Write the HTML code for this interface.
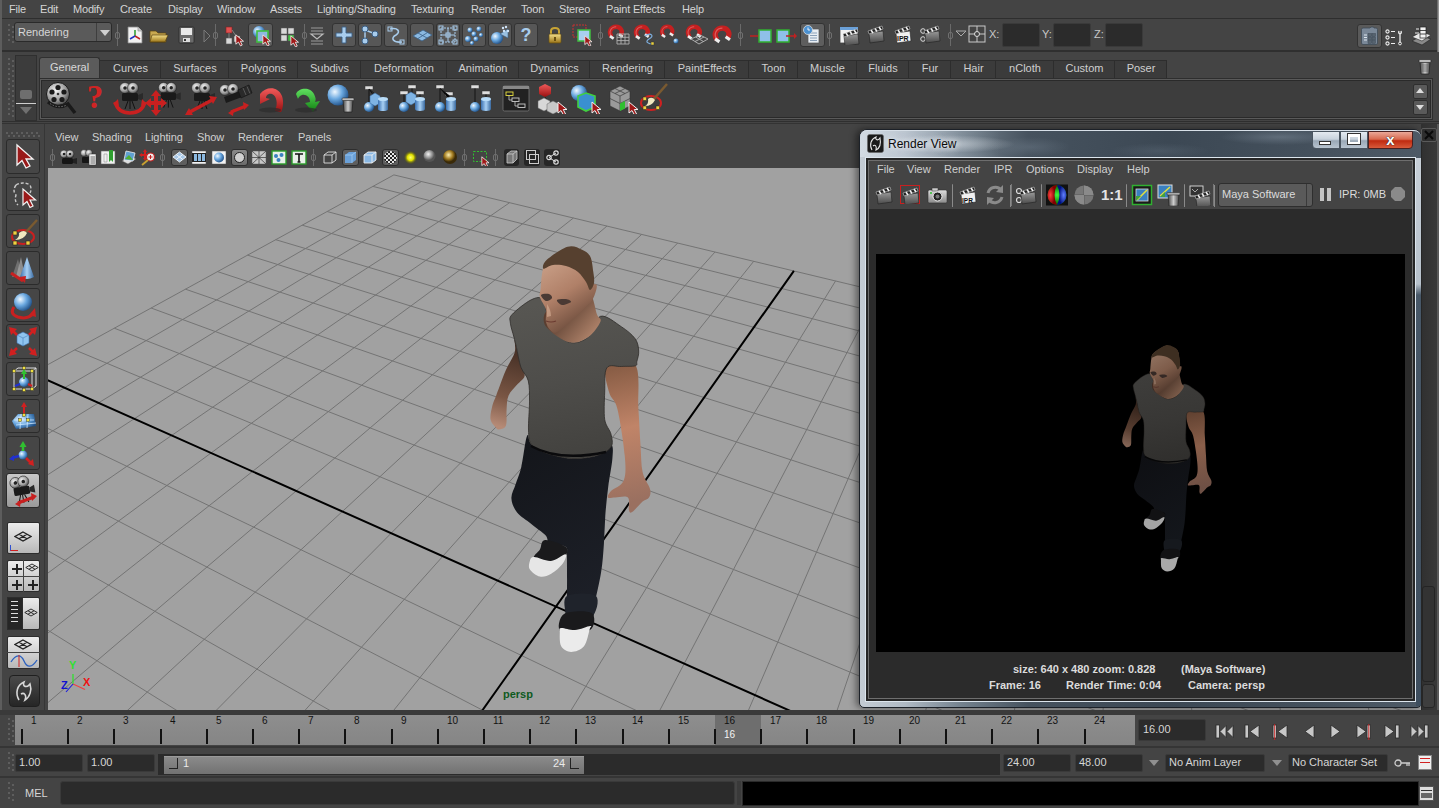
<!DOCTYPE html><html><head><meta charset="utf-8"><style>
*{margin:0;padding:0;box-sizing:border-box}
html,body{width:1439px;height:808px;overflow:hidden;background:#444444;font-family:"Liberation Sans",sans-serif}
.b{position:absolute}
.t{position:absolute;white-space:nowrap;line-height:1;font-family:"Liberation Sans",sans-serif}
svg{position:absolute;left:0;top:0}
</style></head><body><div class="b" style="left:0px;top:0px;width:1439px;height:18px;background:#444444"></div><div class="b" style="left:0px;top:18px;width:1439px;height:1px;background:#2e2e2e"></div><div class="t" style="left:9px;top:4px;font-size:11px;color:#d4d4d4;letter-spacing:-0.2px">File</div><div class="t" style="left:40px;top:4px;font-size:11px;color:#d4d4d4;letter-spacing:-0.2px">Edit</div><div class="t" style="left:73px;top:4px;font-size:11px;color:#d4d4d4;letter-spacing:-0.2px">Modify</div><div class="t" style="left:120px;top:4px;font-size:11px;color:#d4d4d4;letter-spacing:-0.2px">Create</div><div class="t" style="left:168px;top:4px;font-size:11px;color:#d4d4d4;letter-spacing:-0.2px">Display</div><div class="t" style="left:217px;top:4px;font-size:11px;color:#d4d4d4;letter-spacing:-0.2px">Window</div><div class="t" style="left:270px;top:4px;font-size:11px;color:#d4d4d4;letter-spacing:-0.2px">Assets</div><div class="t" style="left:317px;top:4px;font-size:11px;color:#d4d4d4;letter-spacing:-0.2px">Lighting/Shading</div><div class="t" style="left:411px;top:4px;font-size:11px;color:#d4d4d4;letter-spacing:-0.2px">Texturing</div><div class="t" style="left:471px;top:4px;font-size:11px;color:#d4d4d4;letter-spacing:-0.2px">Render</div><div class="t" style="left:521px;top:4px;font-size:11px;color:#d4d4d4;letter-spacing:-0.2px">Toon</div><div class="t" style="left:559px;top:4px;font-size:11px;color:#d4d4d4;letter-spacing:-0.2px">Stereo</div><div class="t" style="left:606px;top:4px;font-size:11px;color:#d4d4d4;letter-spacing:-0.2px">Paint Effects</div><div class="t" style="left:682px;top:4px;font-size:11px;color:#d4d4d4;letter-spacing:-0.2px">Help</div><div class="b" style="left:0px;top:19px;width:1439px;height:32px;background:#444444"></div><div class="b" style="left:0px;top:50px;width:1439px;height:2px;background:#2f2f2f"></div><div class="b" style="left:8px;top:24px;width:2px;height:2px;background:#5e5e5e"></div><div class="b" style="left:12px;top:26px;width:2px;height:2px;background:#5e5e5e"></div><div class="b" style="left:8px;top:29px;width:2px;height:2px;background:#5e5e5e"></div><div class="b" style="left:12px;top:31px;width:2px;height:2px;background:#5e5e5e"></div><div class="b" style="left:8px;top:34px;width:2px;height:2px;background:#5e5e5e"></div><div class="b" style="left:12px;top:36px;width:2px;height:2px;background:#5e5e5e"></div><div class="b" style="left:8px;top:39px;width:2px;height:2px;background:#5e5e5e"></div><div class="b" style="left:12px;top:41px;width:2px;height:2px;background:#5e5e5e"></div><div class="b" style="left:14px;top:22px;width:98px;height:20px;background:#5a5a5a;border:1px solid #2a2a2a;border-radius:3px"></div><div class="b" style="left:96px;top:23px;width:1px;height:18px;background:#3e3e3e"></div><div class="t" style="left:18px;top:27px;font-size:11px;color:#d6d6d6;">Rendering</div><div class="b" style="left:100px;top:30px;width:0;height:0;border-left:5px solid transparent;border-right:5px solid transparent;border-top:6px solid #d0d0d0"></div><div class="b" style="left:117px;top:24px;width:1px;height:22px;background:#6a6a6a"></div><div class="b" style="left:115px;top:32px;width:5px;height:7px;border:1px solid #707070;border-radius:2px"></div><div class="b" style="left:215px;top:24px;width:1px;height:22px;background:#6a6a6a"></div><div class="b" style="left:213px;top:32px;width:5px;height:7px;border:1px solid #707070;border-radius:2px"></div><div class="b" style="left:304px;top:24px;width:1px;height:22px;background:#6a6a6a"></div><div class="b" style="left:302px;top:32px;width:5px;height:7px;border:1px solid #707070;border-radius:2px"></div><div class="b" style="left:600px;top:24px;width:1px;height:22px;background:#6a6a6a"></div><div class="b" style="left:598px;top:32px;width:5px;height:7px;border:1px solid #707070;border-radius:2px"></div><div class="b" style="left:740px;top:24px;width:1px;height:22px;background:#6a6a6a"></div><div class="b" style="left:738px;top:32px;width:5px;height:7px;border:1px solid #707070;border-radius:2px"></div><div class="b" style="left:829px;top:24px;width:1px;height:22px;background:#6a6a6a"></div><div class="b" style="left:827px;top:32px;width:5px;height:7px;border:1px solid #707070;border-radius:2px"></div><div class="b" style="left:950px;top:24px;width:1px;height:22px;background:#6a6a6a"></div><div class="b" style="left:948px;top:32px;width:5px;height:7px;border:1px solid #707070;border-radius:2px"></div><svg width="0" height="0" style="position:absolute"><defs><linearGradient id="gblue" x1="0" y1="0" x2="1" y2="1"><stop offset="0" stop-color="#dff0ff"/><stop offset="1" stop-color="#5a9ad0"/></linearGradient><radialGradient id="gsph" cx="0.35" cy="0.35" r="0.7"><stop offset="0" stop-color="#f0f8ff"/><stop offset="0.5" stop-color="#6aa8e0"/><stop offset="1" stop-color="#1f4f86"/></radialGradient><linearGradient id="gred" x1="0" y1="0" x2="0" y2="1"><stop offset="0" stop-color="#f05a5a"/><stop offset="1" stop-color="#9a1010"/></linearGradient><linearGradient id="ggold" x1="0" y1="0" x2="0" y2="1"><stop offset="0" stop-color="#f5e08a"/><stop offset="1" stop-color="#9a7418"/></linearGradient><linearGradient id="gclap" x1="0" y1="0" x2="0" y2="1"><stop offset="0" stop-color="#9a9a9a"/><stop offset="1" stop-color="#4a4a4a"/></linearGradient><linearGradient id="ggrey" x1="0" y1="0" x2="0" y2="1"><stop offset="0" stop-color="#e0e0e0"/><stop offset="1" stop-color="#8a8a8a"/></linearGradient></defs></svg><svg class="b" style="left:127px;top:26px" width="16" height="18" viewBox="0 0 16 18"><path d="M1 1H11L15 5V17H1Z" fill="#f2f2f2" stroke="#888" stroke-width="0.8"/><path d="M11 1V5H15" fill="#ccc" stroke="#888" stroke-width="0.6"/><path d="M8 10V4" stroke="#2a9a2a" stroke-width="1.5"/><path d="M8 10L13 13" stroke="#c02020" stroke-width="1.5"/><path d="M8 10L3 13" stroke="#2030c0" stroke-width="1.5"/></svg><svg class="b" style="left:149px;top:28px" width="20" height="16" viewBox="0 0 20 16"><path d="M1 3H7L9 5H17V14H1Z" fill="#c8a850" stroke="#5a4410" stroke-width="0.7"/><path d="M3 7H19L16 14H1Z" fill="url(#ggold)" stroke="#5a4410" stroke-width="0.7"/></svg><svg class="b" style="left:178px;top:26px" width="17" height="18" viewBox="0 0 17 18"><path d="M1 2Q1 1 2 1H15Q16 1 16 2V16Q16 17 15 17H2Q1 17 1 16Z" fill="#6a6a6a" stroke="#2a2a2a" stroke-width="0.8"/><rect x="3" y="2" width="11" height="7" fill="#e8e8e8"/><rect x="5" y="12" width="7" height="4" fill="#ddd"/><rect x="6" y="13" width="2" height="2" fill="#333"/></svg><svg class="b" style="left:202px;top:29px" width="9" height="14" viewBox="0 0 9 14"><path d="M2 1L8 7L2 13Z" fill="none" stroke="#7a7a7a" stroke-width="1"/></svg><svg class="b" style="left:224px;top:25px" width="22" height="22" viewBox="0 0 22 22"><rect x="2" y="2" width="6" height="6" fill="#e05050" stroke="#802020" stroke-width="0.6"/><rect x="2" y="13" width="6" height="6" fill="#d8d8d8" stroke="#555" stroke-width="0.6"/><rect x="10" y="11" width="6" height="6" fill="#d8d8d8" stroke="#555" stroke-width="0.6"/><path d="M5 8V13M8 5L12 11" stroke="#aaa" stroke-width="0.6"/><path transform="translate(11 9) scale(0.85)" d="M1 1L1 12L4 9.5L6.5 14L8.5 13L6.3 8.5L10 8.5Z" fill="#a01818" stroke="#f0f0f0" stroke-width="1"/></svg><div class="b" style="left:248px;top:23px;width:25px;height:24px;background:#5c5c5c;border:1px solid #333;border-radius:3px"></div><svg class="b" style="left:250px;top:24px" width="22" height="22" viewBox="0 0 22 22"><circle cx="9" cy="8" r="6" fill="url(#gsph)"/><rect x="7" y="7" width="11" height="11" fill="#8fb8e0" stroke="#40c040" stroke-width="1.6"/><path transform="translate(12 10) scale(0.85)" d="M1 1L1 12L4 9.5L6.5 14L8.5 13L6.3 8.5L10 8.5Z" fill="#a01818" stroke="#f0f0f0" stroke-width="1"/></svg><svg class="b" style="left:279px;top:25px" width="22" height="22" viewBox="0 0 22 22"><rect x="2" y="3" width="6" height="6" fill="#d8d8d8" stroke="#555" stroke-width="0.5"/><rect x="9" y="3" width="6" height="6" fill="#d8d8d8" stroke="#555" stroke-width="0.5"/><rect x="2" y="10" width="6" height="6" fill="#d8d8d8" stroke="#555" stroke-width="0.5"/><rect x="9" y="10" width="6" height="6" fill="#40c040" stroke="#555" stroke-width="0.5"/><path transform="translate(11 10) scale(0.85)" d="M1 1L1 12L4 9.5L6.5 14L8.5 13L6.3 8.5L10 8.5Z" fill="#a01818" stroke="#f0f0f0" stroke-width="1"/></svg><svg class="b" style="left:308px;top:26px" width="18" height="20" viewBox="0 0 18 20"><path d="M3 2H15M3 5H15M3 15H15M3 18H15" stroke="#9a9a9a" stroke-width="1"/><path d="M3 8H15L9 13Z" fill="none" stroke="#bbb" stroke-width="1.2"/></svg><div class="b" style="left:332px;top:23px;width:24px;height:24px;background:#575757;border:1px solid #333;border-radius:3px"></div><div class="b" style="left:358px;top:23px;width:24px;height:24px;background:#575757;border:1px solid #333;border-radius:3px"></div><div class="b" style="left:384px;top:23px;width:24px;height:24px;background:#575757;border:1px solid #333;border-radius:3px"></div><div class="b" style="left:410px;top:23px;width:24px;height:24px;background:#575757;border:1px solid #333;border-radius:3px"></div><div class="b" style="left:436px;top:23px;width:24px;height:24px;background:#575757;border:1px solid #333;border-radius:3px"></div><div class="b" style="left:462px;top:23px;width:24px;height:24px;background:#575757;border:1px solid #333;border-radius:3px"></div><div class="b" style="left:488px;top:23px;width:24px;height:24px;background:#575757;border:1px solid #333;border-radius:3px"></div><div class="b" style="left:514px;top:23px;width:24px;height:24px;background:#575757;border:1px solid #333;border-radius:3px"></div><svg class="b" style="left:332px;top:23px" width="24" height="24" viewBox="0 0 24 24"><path d="M10 4H14V10H20V14H14V20H10V14H4V10H10Z" fill="#a8ccec" stroke="#3a5e84" stroke-width="0.9"/></svg><svg class="b" style="left:358px;top:23px" width="24" height="24" viewBox="0 0 24 24"><path d="M7 7V17M7 7L15 10" stroke="#a8ccec" stroke-width="1.5"/><circle cx="7" cy="6" r="3" fill="#a8ccec" stroke="#3a5e84"/><circle cx="7" cy="18" r="3" fill="#a8ccec" stroke="#3a5e84"/><circle cx="17" cy="11" r="3" fill="#a8ccec" stroke="#3a5e84"/></svg><svg class="b" style="left:384px;top:23px" width="24" height="24" viewBox="0 0 24 24"><path d="M6 6C14 4 17 9 12 12C6 15 9 20 18 19" fill="none" stroke="#a8ccec" stroke-width="1.6"/><rect x="4" y="4" width="4" height="4" fill="none" stroke="#a8ccec"/><rect x="16" y="17" width="4" height="4" fill="none" stroke="#a8ccec"/></svg><svg class="b" style="left:410px;top:23px" width="24" height="24" viewBox="0 0 24 24"><path d="M3 13L13 7L22 12L12 18Z" fill="#8ab8e0" stroke="#3a5e84" stroke-width="0.8"/><path d="M8 10L17 15M8 15.5L17.5 9.5" stroke="#3a5e84" stroke-width="0.8"/></svg><svg class="b" style="left:436px;top:23px" width="24" height="24" viewBox="0 0 24 24"><rect x="5" y="5" width="14" height="14" fill="none" stroke="#a8ccec" stroke-dasharray="2 1"/><path d="M5 12H19M12 5V19" stroke="#a8ccec"/><rect x="3" y="3" width="4" height="4" fill="none" stroke="#a8ccec"/><rect x="17" y="3" width="4" height="4" fill="none" stroke="#a8ccec"/><rect x="3" y="17" width="4" height="4" fill="none" stroke="#a8ccec"/><rect x="17" y="17" width="4" height="4" fill="none" stroke="#a8ccec"/><rect x="10" y="10" width="4" height="4" fill="none" stroke="#a8ccec"/></svg><svg class="b" style="left:462px;top:23px" width="24" height="24" viewBox="0 0 24 24"><circle cx="8" cy="7" r="2.5" fill="url(#gsph)"/><circle cx="17" cy="6" r="2.5" fill="url(#gsph)"/><circle cx="12" cy="11" r="2.5" fill="url(#gsph)"/><circle cx="6" cy="16" r="3" fill="url(#gsph)"/><circle cx="14" cy="16" r="2.5" fill="url(#gsph)"/><circle cx="19" cy="12" r="2" fill="url(#gsph)"/><circle cx="10" cy="20" r="2" fill="url(#gsph)"/></svg><svg class="b" style="left:488px;top:23px" width="24" height="24" viewBox="0 0 24 24"><circle cx="9" cy="15" r="6" fill="url(#gsph)"/><path d="M12 11L20 6V15Z" fill="#9ac0e0" stroke="#3a5e84" stroke-width="0.6"/><circle cx="15" cy="5" r="1.2" fill="#cfe4f8"/><circle cx="18" cy="4" r="1.2" fill="#cfe4f8"/><circle cx="20" cy="8" r="1.2" fill="#cfe4f8"/><circle cx="16" cy="8" r="1.2" fill="#cfe4f8"/></svg><div class="t" style="left:514px;top:26px;width:24px;text-align:center;font-size:18px;font-weight:bold;color:#a8ccec">?</div><svg class="b" style="left:547px;top:25px" width="16" height="20" viewBox="0 0 16 20"><path d="M4 9V6C4 2 12 2 12 6V9" fill="none" stroke="#c8a434" stroke-width="2"/><rect x="2" y="9" width="12" height="9" rx="1" fill="url(#ggold)" stroke="#6a5010" stroke-width="0.7"/><rect x="7" y="12" width="2" height="4" fill="#6a5010"/></svg><svg class="b" style="left:571px;top:23px" width="22" height="23" viewBox="0 0 22 23"><rect x="2" y="2" width="13" height="12" fill="none" stroke="#c83030" stroke-width="1" stroke-dasharray="2 1"/><rect x="7" y="7" width="12" height="11" fill="#a8d0f0" stroke="#40c040" stroke-width="1.5"/><path transform="translate(13 12) scale(0.8)" d="M1 1L1 12L4 9.5L6.5 14L8.5 13L6.3 8.5L10 8.5Z" fill="#a01818" stroke="#f0f0f0" stroke-width="1"/></svg><svg class="b" style="left:607px;top:24px" width="24" height="22" viewBox="0 0 24 22"><g transform="translate(2 1) scale(0.9)"><path d="M3 13C-1 8 2 2 8 2C13 2 16 7 13 11" fill="none" stroke="#c42020" stroke-width="5"/><path d="M3 13C-1 8 2 2 8 2" fill="none" stroke="#f08080" stroke-width="1.2" opacity="0.6"/><rect x="1" y="12" width="5" height="3" fill="#eee" transform="rotate(35 3 13)"/><rect x="11" y="10" width="5" height="3" fill="#eee" transform="rotate(35 13 11)"/></g><path d="M10 10H22V20H10ZM14 10V20M18 10V20M10 13.3H22M10 16.6H22" fill="none" stroke="#b0b0b0" stroke-width="0.9"/></svg><svg class="b" style="left:633px;top:24px" width="24" height="22" viewBox="0 0 24 22"><g transform="translate(2 1) scale(0.9)"><path d="M3 13C-1 8 2 2 8 2C13 2 16 7 13 11" fill="none" stroke="#c42020" stroke-width="5"/><path d="M3 13C-1 8 2 2 8 2" fill="none" stroke="#f08080" stroke-width="1.2" opacity="0.6"/><rect x="1" y="12" width="5" height="3" fill="#eee" transform="rotate(35 3 13)"/><rect x="11" y="10" width="5" height="3" fill="#eee" transform="rotate(35 13 11)"/></g><path d="M12 12C18 8 22 12 16 15C11 18 16 20 20 20" fill="none" stroke="#7fb0e0" stroke-width="1.2"/><rect x="18" y="18" width="3" height="3" fill="#e8d040" stroke="#333" stroke-width="0.5"/></svg><svg class="b" style="left:659px;top:24px" width="24" height="22" viewBox="0 0 24 22"><g transform="translate(2 1) scale(0.8)"><path d="M3 13C-1 8 2 2 8 2C13 2 16 7 13 11" fill="none" stroke="#c42020" stroke-width="5"/><path d="M3 13C-1 8 2 2 8 2" fill="none" stroke="#f08080" stroke-width="1.2" opacity="0.6"/><rect x="1" y="12" width="5" height="3" fill="#eee" transform="rotate(35 3 13)"/><rect x="11" y="10" width="5" height="3" fill="#eee" transform="rotate(35 13 11)"/></g><circle cx="17" cy="17" r="2.5" fill="url(#gsph)"/></svg><svg class="b" style="left:685px;top:24px" width="24" height="22" viewBox="0 0 24 22"><g transform="translate(2 1) scale(0.9)"><path d="M3 13C-1 8 2 2 8 2C13 2 16 7 13 11" fill="none" stroke="#c42020" stroke-width="5"/><path d="M3 13C-1 8 2 2 8 2" fill="none" stroke="#f08080" stroke-width="1.2" opacity="0.6"/><rect x="1" y="12" width="5" height="3" fill="#eee" transform="rotate(35 3 13)"/><rect x="11" y="10" width="5" height="3" fill="#eee" transform="rotate(35 13 11)"/></g><path d="M6 15L15 11L23 15L14 20Z M10.5 13L18.5 17.5 M10 17.5L19 13" fill="none" stroke="#b8b8b8" stroke-width="0.9"/></svg><svg class="b" style="left:712px;top:24px" width="22" height="22" viewBox="0 0 22 22"><g transform="translate(2 2) scale(1.05)"><path d="M3 13C-1 8 2 2 8 2C13 2 16 7 13 11" fill="none" stroke="#c42020" stroke-width="5"/><path d="M3 13C-1 8 2 2 8 2" fill="none" stroke="#f08080" stroke-width="1.2" opacity="0.6"/><rect x="1" y="12" width="5" height="3" fill="#eee" transform="rotate(35 3 13)"/><rect x="11" y="10" width="5" height="3" fill="#eee" transform="rotate(35 13 11)"/></g></svg><svg class="b" style="left:750px;top:27px" width="22" height="18" viewBox="0 0 22 18"><path d="M0 9H9" stroke="#c02020" stroke-width="1.5"/><path d="M8 6L11 9L8 12Z" fill="#c02020"/><rect x="9" y="3" width="12" height="12" fill="#8fc0e8" stroke="#30b030" stroke-width="1.5"/></svg><svg class="b" style="left:776px;top:27px" width="22" height="18" viewBox="0 0 22 18"><rect x="1" y="3" width="12" height="12" fill="#8fc0e8" stroke="#30b030" stroke-width="1.5"/><path d="M10 9H19" stroke="#c02020" stroke-width="1.5"/><path d="M18 6L21 9L18 12Z" fill="#c02020"/></svg><div class="b" style="left:800px;top:23px;width:25px;height:24px;background:#5e5e5e;border:1px solid #333;border-radius:3px"></div><svg class="b" style="left:800px;top:23px" width="25" height="24" viewBox="0 0 25 24"><path d="M8 6H19V20H8Z" fill="#e8eef4" stroke="#555" stroke-width="0.7"/><path d="M10 10H17M10 12.5H17M10 15H17M10 17.5H17" stroke="#8aa0b8" stroke-width="1"/><circle cx="8" cy="7" r="4.5" fill="#4a90d0" stroke="#ddd" stroke-width="0.8"/><path d="M8 4.5V7H10" stroke="#fff" stroke-width="0.9" fill="none"/></svg><svg class="b" style="left:838px;top:25px" width="22" height="20" viewBox="0 0 22 20"><rect x="2" y="2" width="18" height="16" fill="#f2f2f2" stroke="#444" stroke-width="0.8"/><rect x="2" y="2" width="18" height="3" fill="#6aa0d8"/><g transform="translate(4 3)"><path d="M2 8L16 6L17 16L3 18Z" fill="url(#gclap)" stroke="#222" stroke-width="0.6"/><path d="M1 6L15 1L16 4L2 9Z" fill="#222" stroke="#ddd" stroke-width="0.5"/><path d="M4 5L6 8M8 3.5L10 6.5M12 2L14 5" stroke="#eee" stroke-width="1.6"/></g></svg><svg class="b" style="left:866px;top:24px" width="20" height="20" viewBox="0 0 20 20"><g transform="translate(1 1)"><path d="M2 8L16 6L17 16L3 18Z" fill="url(#gclap)" stroke="#222" stroke-width="0.6"/><path d="M1 6L15 1L16 4L2 9Z" fill="#222" stroke="#ddd" stroke-width="0.5"/><path d="M4 5L6 8M8 3.5L10 6.5M12 2L14 5" stroke="#eee" stroke-width="1.6"/></g></svg><svg class="b" style="left:893px;top:24px" width="20" height="20" viewBox="0 0 20 20"><g transform="translate(1 1)"><path d="M2 8L16 6L17 16L3 18Z" fill="#f0f0f0" stroke="#222" stroke-width="0.6"/><path d="M1 6L15 1L16 4L2 9Z" fill="#222" stroke="#ddd" stroke-width="0.5"/><path d="M4 5L6 8M8 3.5L10 6.5M12 2L14 5" stroke="#eee" stroke-width="1.6"/></g><text x="4" y="17" font-size="7" font-weight="bold" fill="#111" font-family="Liberation Sans">IPR</text></svg><svg class="b" style="left:919px;top:24px" width="22" height="20" viewBox="0 0 22 20"><circle cx="4" cy="7" r="2.3" fill="none" stroke="#ddd" stroke-width="1"/><circle cx="4" cy="15" r="2.3" fill="none" stroke="#ddd" stroke-width="1"/><g transform="translate(4 1)"><path d="M2 8L16 6L17 16L3 18Z" fill="url(#gclap)" stroke="#222" stroke-width="0.6"/><path d="M1 6L15 1L16 4L2 9Z" fill="#222" stroke="#ddd" stroke-width="0.5"/><path d="M4 5L6 8M8 3.5L10 6.5M12 2L14 5" stroke="#eee" stroke-width="1.6"/></g></svg><svg class="b" style="left:955px;top:30px" width="12" height="8" viewBox="0 0 12 8"><path d="M1 1H11L6 6Z" fill="none" stroke="#aaa" stroke-width="1"/></svg><svg class="b" style="left:968px;top:25px" width="18" height="18" viewBox="0 0 18 18"><rect x="1" y="1" width="16" height="16" fill="none" stroke="#c8c8c8" stroke-width="1"/><path d="M9 1V17M1 9H17" stroke="#c8c8c8" stroke-width="1"/><circle cx="9" cy="9" r="2.5" fill="#444" stroke="#ddd"/></svg><div class="t" style="left:989px;top:29px;font-size:11px;color:#c8c8c8;">X:</div><div class="b" style="left:1002px;top:23px;width:38px;height:24px;background:#2b2b2b;border:1px solid #3a3a3a;border-radius:2px"></div><div class="t" style="left:1042px;top:29px;font-size:11px;color:#c8c8c8;">Y:</div><div class="b" style="left:1053px;top:23px;width:38px;height:24px;background:#2b2b2b;border:1px solid #3a3a3a;border-radius:2px"></div><div class="t" style="left:1094px;top:29px;font-size:11px;color:#c8c8c8;">Z:</div><div class="b" style="left:1105px;top:23px;width:38px;height:24px;background:#2b2b2b;border:1px solid #3a3a3a;border-radius:2px"></div><div class="b" style="left:1357px;top:24px;width:25px;height:24px;background:#5a5a5a;border:1px solid #333;border-radius:3px"></div><svg class="b" style="left:1357px;top:24px" width="25" height="24" viewBox="0 0 25 24"><path d="M4.5 5.5Q4.5 4 6 4H13L14 3H16.5L17 4H19Q20.5 4 20.5 5.5V19Q20.5 20.5 19 20.5H6Q4.5 20.5 4.5 19Z" fill="#7a8898" stroke="#3e4a56" stroke-width="0.8"/><path d="M7 11H10M7 13.5H10M7 16H10" stroke="#dde6ee" stroke-width="1"/><rect x="11" y="9.5" width="3.5" height="3" fill="#56636f" stroke="#3e4a56" stroke-width="0.5"/><rect x="15" y="9.5" width="3.5" height="3" fill="#56636f" stroke="#3e4a56" stroke-width="0.5"/><rect x="11" y="13" width="3.5" height="3" fill="#56636f" stroke="#3e4a56" stroke-width="0.5"/><rect x="15" y="13" width="3.5" height="3" fill="#56636f" stroke="#3e4a56" stroke-width="0.5"/><rect x="11" y="16.5" width="3.5" height="3" fill="#56636f" stroke="#3e4a56" stroke-width="0.5"/><rect x="15" y="16.5" width="3.5" height="3" fill="#56636f" stroke="#3e4a56" stroke-width="0.5"/></svg><svg class="b" style="left:1384px;top:24px" width="22" height="24" viewBox="0 0 22 24"><circle cx="3.5" cy="7.5" r="1.6" fill="none" stroke="#eee" stroke-width="1.1"/><circle cx="3.5" cy="13.5" r="1.6" fill="none" stroke="#eee" stroke-width="1.1"/><circle cx="3.5" cy="19.5" r="1.6" fill="none" stroke="#eee" stroke-width="1.1"/><path d="M7 7.5H11M7 13.5H11M7 19.5H11" stroke="#eee" stroke-width="1.2"/><path d="M15 7Q14 9 16 10V18.5M17 7Q18 9 16 10" stroke="#eee" stroke-width="1.3" fill="none"/><circle cx="16" cy="19.5" r="1.4" fill="none" stroke="#eee" stroke-width="1"/></svg><svg class="b" style="left:1410px;top:25px" width="24" height="22" viewBox="0 0 24 22"><path d="M2 16L12 20L21 14L11 11Z" fill="#8a8a8a" stroke="#222" stroke-width="0.6"/><path d="M2 12L12 16L21 10L11 7Z" fill="#e8e8e8" stroke="#222" stroke-width="0.6"/><rect x="10" y="2" width="6" height="11" fill="#f2f2f2" stroke="#222" stroke-width="0.7"/><path d="M10 5.5H16M10 9H16" stroke="#222" stroke-width="0.8"/><path d="M6 4H9M5 8H9" stroke="#eee" stroke-width="1.2"/></svg><div class="b" style="left:1437px;top:0px;width:2px;height:119px;background:linear-gradient(90deg,#5a5a5a,#a8a8a8)"></div><div class="b" style="left:0px;top:52px;width:1439px;height:70px;background:#444444"></div><div class="b" style="left:0px;top:121px;width:1439px;height:1px;background:#2f2f2f"></div><div class="b" style="left:0px;top:123px;width:1439px;height:1px;background:#333333"></div><div class="b" style="left:8px;top:58px;width:2px;height:2px;background:#5e5e5e"></div><div class="b" style="left:12px;top:60px;width:2px;height:2px;background:#5e5e5e"></div><div class="b" style="left:8px;top:63px;width:2px;height:2px;background:#5e5e5e"></div><div class="b" style="left:12px;top:65px;width:2px;height:2px;background:#5e5e5e"></div><div class="b" style="left:8px;top:68px;width:2px;height:2px;background:#5e5e5e"></div><div class="b" style="left:12px;top:70px;width:2px;height:2px;background:#5e5e5e"></div><div class="b" style="left:8px;top:73px;width:2px;height:2px;background:#5e5e5e"></div><div class="b" style="left:12px;top:75px;width:2px;height:2px;background:#5e5e5e"></div><div class="b" style="left:8px;top:78px;width:2px;height:2px;background:#5e5e5e"></div><div class="b" style="left:12px;top:80px;width:2px;height:2px;background:#5e5e5e"></div><div class="b" style="left:8px;top:83px;width:2px;height:2px;background:#5e5e5e"></div><div class="b" style="left:12px;top:85px;width:2px;height:2px;background:#5e5e5e"></div><div class="b" style="left:8px;top:88px;width:2px;height:2px;background:#5e5e5e"></div><div class="b" style="left:12px;top:90px;width:2px;height:2px;background:#5e5e5e"></div><div class="b" style="left:8px;top:93px;width:2px;height:2px;background:#5e5e5e"></div><div class="b" style="left:12px;top:95px;width:2px;height:2px;background:#5e5e5e"></div><div class="b" style="left:8px;top:98px;width:2px;height:2px;background:#5e5e5e"></div><div class="b" style="left:12px;top:100px;width:2px;height:2px;background:#5e5e5e"></div><div class="b" style="left:8px;top:103px;width:2px;height:2px;background:#5e5e5e"></div><div class="b" style="left:12px;top:105px;width:2px;height:2px;background:#5e5e5e"></div><div class="b" style="left:8px;top:108px;width:2px;height:2px;background:#5e5e5e"></div><div class="b" style="left:12px;top:110px;width:2px;height:2px;background:#5e5e5e"></div><div class="b" style="left:8px;top:113px;width:2px;height:2px;background:#5e5e5e"></div><div class="b" style="left:12px;top:115px;width:2px;height:2px;background:#5e5e5e"></div><div class="b" style="left:15px;top:55px;width:22px;height:66px;background:#3c3c3c;border:1px solid #2f2f2f"></div><div class="b" style="left:20px;top:90px;width:12px;height:9px;background:#6e6e6e;border-radius:2px"></div><div class="b" style="left:16px;top:103px;width:20px;height:1px;background:#cfcfcf"></div><div class="b" style="left:20px;top:107px;width:0;height:0;border-left:6px solid transparent;border-right:6px solid transparent;border-top:7px solid #707070"></div><div class="b" style="left:39px;top:57px;width:61px;height:22px;background:#5b5b5b;border:1px solid #303030;border-bottom:none;border-radius:3px 3px 0 0"></div><div class="t" style="left:50px;top:62px;font-size:11px;color:#d8d8d8;">General</div><div class="b" style="left:100px;top:60px;width:61px;height:19px;background:#3b3b3b;border:1px solid #2d2d2d;border-bottom:none;border-left:none"></div><div class="t" style="left:100px;top:63px;width:61px;text-align:center;font-size:11px;color:#cfcfcf">Curves</div><div class="b" style="left:161px;top:60px;width:68px;height:19px;background:#3b3b3b;border:1px solid #2d2d2d;border-bottom:none;border-left:none"></div><div class="t" style="left:161px;top:63px;width:68px;text-align:center;font-size:11px;color:#cfcfcf">Surfaces</div><div class="b" style="left:229px;top:60px;width:69px;height:19px;background:#3b3b3b;border:1px solid #2d2d2d;border-bottom:none;border-left:none"></div><div class="t" style="left:229px;top:63px;width:69px;text-align:center;font-size:11px;color:#cfcfcf">Polygons</div><div class="b" style="left:298px;top:60px;width:63px;height:19px;background:#3b3b3b;border:1px solid #2d2d2d;border-bottom:none;border-left:none"></div><div class="t" style="left:298px;top:63px;width:63px;text-align:center;font-size:11px;color:#cfcfcf">Subdivs</div><div class="b" style="left:361px;top:60px;width:86px;height:19px;background:#3b3b3b;border:1px solid #2d2d2d;border-bottom:none;border-left:none"></div><div class="t" style="left:361px;top:63px;width:86px;text-align:center;font-size:11px;color:#cfcfcf">Deformation</div><div class="b" style="left:447px;top:60px;width:72px;height:19px;background:#3b3b3b;border:1px solid #2d2d2d;border-bottom:none;border-left:none"></div><div class="t" style="left:447px;top:63px;width:72px;text-align:center;font-size:11px;color:#cfcfcf">Animation</div><div class="b" style="left:519px;top:60px;width:71px;height:19px;background:#3b3b3b;border:1px solid #2d2d2d;border-bottom:none;border-left:none"></div><div class="t" style="left:519px;top:63px;width:71px;text-align:center;font-size:11px;color:#cfcfcf">Dynamics</div><div class="b" style="left:590px;top:60px;width:75px;height:19px;background:#3b3b3b;border:1px solid #2d2d2d;border-bottom:none;border-left:none"></div><div class="t" style="left:590px;top:63px;width:75px;text-align:center;font-size:11px;color:#cfcfcf">Rendering</div><div class="b" style="left:665px;top:60px;width:84px;height:19px;background:#3b3b3b;border:1px solid #2d2d2d;border-bottom:none;border-left:none"></div><div class="t" style="left:665px;top:63px;width:84px;text-align:center;font-size:11px;color:#cfcfcf">PaintEffects</div><div class="b" style="left:749px;top:60px;width:49px;height:19px;background:#3b3b3b;border:1px solid #2d2d2d;border-bottom:none;border-left:none"></div><div class="t" style="left:749px;top:63px;width:49px;text-align:center;font-size:11px;color:#cfcfcf">Toon</div><div class="b" style="left:798px;top:60px;width:59px;height:19px;background:#3b3b3b;border:1px solid #2d2d2d;border-bottom:none;border-left:none"></div><div class="t" style="left:798px;top:63px;width:59px;text-align:center;font-size:11px;color:#cfcfcf">Muscle</div><div class="b" style="left:857px;top:60px;width:52px;height:19px;background:#3b3b3b;border:1px solid #2d2d2d;border-bottom:none;border-left:none"></div><div class="t" style="left:857px;top:63px;width:52px;text-align:center;font-size:11px;color:#cfcfcf">Fluids</div><div class="b" style="left:909px;top:60px;width:42px;height:19px;background:#3b3b3b;border:1px solid #2d2d2d;border-bottom:none;border-left:none"></div><div class="t" style="left:909px;top:63px;width:42px;text-align:center;font-size:11px;color:#cfcfcf">Fur</div><div class="b" style="left:951px;top:60px;width:45px;height:19px;background:#3b3b3b;border:1px solid #2d2d2d;border-bottom:none;border-left:none"></div><div class="t" style="left:951px;top:63px;width:45px;text-align:center;font-size:11px;color:#cfcfcf">Hair</div><div class="b" style="left:996px;top:60px;width:58px;height:19px;background:#3b3b3b;border:1px solid #2d2d2d;border-bottom:none;border-left:none"></div><div class="t" style="left:996px;top:63px;width:58px;text-align:center;font-size:11px;color:#cfcfcf">nCloth</div><div class="b" style="left:1054px;top:60px;width:61px;height:19px;background:#3b3b3b;border:1px solid #2d2d2d;border-bottom:none;border-left:none"></div><div class="t" style="left:1054px;top:63px;width:61px;text-align:center;font-size:11px;color:#cfcfcf">Custom</div><div class="b" style="left:1115px;top:60px;width:52px;height:19px;background:#3b3b3b;border:1px solid #2d2d2d;border-bottom:none;border-left:none"></div><div class="t" style="left:1115px;top:63px;width:52px;text-align:center;font-size:11px;color:#cfcfcf">Poser</div><div class="b" style="left:39px;top:78px;width:1394px;height:42px;background:#5a5a5a;border:1px solid #2e2e2e"></div><div class="b" style="left:41px;top:80px;width:1390px;height:38px;background:#3d3d3d;border:1px solid #2a2a2a"></div><div class="b" style="left:1413px;top:84px;width:15px;height:15px;background:#5a5a5a;border:1px solid #2e2e2e;border-radius:2px"></div><div class="b" style="left:1416px;top:88px;width:0;height:0;border-left:4px solid transparent;border-right:4px solid transparent;border-bottom:5px solid #ddd"></div><div class="b" style="left:1413px;top:100px;width:15px;height:15px;background:#5a5a5a;border:1px solid #2e2e2e;border-radius:2px"></div><div class="b" style="left:1416px;top:105px;width:0;height:0;border-left:4px solid transparent;border-right:4px solid transparent;border-top:5px solid #ddd"></div><svg class="b" style="left:1416px;top:56px" width="18" height="20" viewBox="0 0 18 20"><path d="M4 6H14L13 18H5Z" fill="url(#gtrash)" stroke="#222" stroke-width="0.7"/><rect x="3" y="3.5" width="12" height="3" rx="1" fill="#bbb" stroke="#222" stroke-width="0.6"/><path d="M7 8V16M9 8V16M11 8V16" stroke="#555" stroke-width="0.6"/></svg><svg width="0" height="0" style="position:absolute"><defs><radialGradient id="greel" cx="0.4" cy="0.35" r="0.7"><stop offset="0" stop-color="#f4f4f4"/><stop offset="0.6" stop-color="#a0a0a0"/><stop offset="1" stop-color="#3a3a3a"/></radialGradient><linearGradient id="gcyl" x1="0" y1="0" x2="1" y2="0"><stop offset="0" stop-color="#3a70b0"/><stop offset="0.5" stop-color="#a8d0f4"/><stop offset="1" stop-color="#3a6aa0"/></linearGradient><linearGradient id="gtrash" x1="0" y1="0" x2="1" y2="0"><stop offset="0" stop-color="#444"/><stop offset="0.5" stop-color="#ccc"/><stop offset="1" stop-color="#444"/></linearGradient><linearGradient id="ggreen" x1="0" y1="0" x2="0" y2="1"><stop offset="0" stop-color="#60e060"/><stop offset="1" stop-color="#108010"/></linearGradient></defs></svg><svg class="b" style="left:44px;top:82px" width="34" height="34" viewBox="0 0 34 34"><circle cx="14" cy="12" r="11.5" fill="url(#greel)" stroke="#1a1a1a" stroke-width="1"/><circle cx="14" cy="5.5" r="2.6" fill="#1a1a1a"/><circle cx="20" cy="10" r="2.6" fill="#1a1a1a"/><circle cx="18" cy="17.5" r="2.6" fill="#1a1a1a"/><circle cx="10" cy="17.5" r="2.6" fill="#1a1a1a"/><circle cx="8" cy="10" r="2.6" fill="#1a1a1a"/><circle cx="14" cy="12" r="1.3" fill="#333"/><path d="M4 20Q14 28 24 22L31 31" fill="none" stroke="#1a1a1a" stroke-width="3.5"/><path d="M6 21.5Q14 27 23 23" fill="none" stroke="#888" stroke-width="0.8" stroke-dasharray="1.5 1.5"/></svg><div class="t" style="left:84px;top:81px;width:22px;text-align:center;font-size:33px;font-weight:bold;color:#d02424;font-family:'Liberation Serif',serif">?</div><svg class="b" style="left:112px;top:82px" width="36" height="34" viewBox="0 0 36 34"><g transform="translate(6 0) scale(1.0) rotate(0 12 10)"><circle cx="7" cy="6" r="5.5" fill="url(#greel)" stroke="#222" stroke-width="0.6"/><circle cx="7" cy="6" r="1.8" fill="#222"/><circle cx="15" cy="6" r="5.5" fill="url(#greel)" stroke="#222" stroke-width="0.6"/><circle cx="15" cy="6" r="1.8" fill="#222"/><rect x="4" y="11" width="16" height="8" rx="1.5" fill="#1a1a1a"/><path d="M20 13L25 11V19L20 17Z" fill="#2a2a2a"/><path d="M10 19L7 27M12 19V27M14 19L17 27" stroke="#111" stroke-width="1"/></g><path d="M3 20Q6 31 18 31Q30 31 33 20" fill="none" stroke="#c82020" stroke-width="3.5"/><path d="M30 17L35 22L29 24Z M6 17L1 22L7 24Z" fill="#c82020"/></svg><svg class="b" style="left:146px;top:82px" width="36" height="34" viewBox="0 0 36 34"><g transform="translate(11 0) scale(0.95) rotate(0 12 10)"><circle cx="7" cy="6" r="5.5" fill="url(#greel)" stroke="#222" stroke-width="0.6"/><circle cx="7" cy="6" r="1.8" fill="#222"/><circle cx="15" cy="6" r="5.5" fill="url(#greel)" stroke="#222" stroke-width="0.6"/><circle cx="15" cy="6" r="1.8" fill="#222"/><rect x="4" y="11" width="16" height="8" rx="1.5" fill="#1a1a1a"/><path d="M20 13L25 11V19L20 17Z" fill="#2a2a2a"/><path d="M10 19L7 27M12 19V27M14 19L17 27" stroke="#111" stroke-width="1"/></g><path d="M10 12L10 30M2 21H18" stroke="#c82020" stroke-width="4"/><path d="M10 8L5 14H15ZM10 34L5 28H15ZM-1 21L5 16V26ZM21 21L15 16V26Z" fill="#c82020"/></svg><svg class="b" style="left:184px;top:82px" width="36" height="34" viewBox="0 0 36 34"><g transform="translate(6 0) scale(1.0) rotate(0 12 10)"><circle cx="7" cy="6" r="5.5" fill="url(#greel)" stroke="#222" stroke-width="0.6"/><circle cx="7" cy="6" r="1.8" fill="#222"/><circle cx="15" cy="6" r="5.5" fill="url(#greel)" stroke="#222" stroke-width="0.6"/><circle cx="15" cy="6" r="1.8" fill="#222"/><rect x="4" y="11" width="16" height="8" rx="1.5" fill="#1a1a1a"/><path d="M20 13L25 11V19L20 17Z" fill="#2a2a2a"/><path d="M10 19L7 27M12 19V27M14 19L17 27" stroke="#111" stroke-width="1"/></g><path d="M4 31L30 17" stroke="#c82020" stroke-width="3.5"/><path d="M1 33L9 33L5 26ZM33 15L25 14L29 22Z" fill="#c82020"/></svg><svg class="b" style="left:218px;top:82px" width="36" height="34" viewBox="0 0 36 34"><circle cx="7" cy="8" r="5.5" fill="url(#greel)" stroke="#222" stroke-width="0.6"/><circle cx="7" cy="8" r="1.8" fill="#222"/><circle cx="15" cy="7" r="5.5" fill="url(#greel)" stroke="#222" stroke-width="0.6"/><circle cx="15" cy="7" r="1.8" fill="#222"/><path d="M6 15L22 9L24 15L8 21Z" fill="#1a1a1a"/><path d="M20 8L31 3L34 11L23 16Z" fill="#2a2a2a" stroke="#111" stroke-width="0.6"/><path d="M25 6L28 13M29 4.5L32 11.5" stroke="#666" stroke-width="0.8"/><path d="M13 30L28 24" stroke="#c82020" stroke-width="3"/><path d="M31 23L25 20L26 28Z M10 31L16 27L15 34Z" fill="#c82020"/></svg><svg class="b" style="left:256px;top:84px" width="32" height="30" viewBox="0 0 32 30"><path d="M4 10C10 2 22 2 26 12C28 18 27 24 25 28L19 27C22 20 21 12 16 10C12 9 10 12 10 14L14 15L4 20Z" fill="url(#gred)"/><ellipse cx="14" cy="26" rx="11" ry="2.5" fill="#2c2c2c" opacity="0.7"/></svg><svg class="b" style="left:292px;top:84px" width="32" height="30" viewBox="0 0 32 30"><path d="M4 10C6 4 18 2 22 10C24 14 24 16 23 18L28 17L21 28L13 19L18 18C18 13 14 10 10 11C7 12 6 15 6 15Z" fill="url(#ggreen)"/><ellipse cx="14" cy="26" rx="11" ry="2.5" fill="#2c2c2c" opacity="0.7"/></svg><svg class="b" style="left:326px;top:84px" width="30" height="30" viewBox="0 0 30 30"><circle cx="12" cy="11" r="10.5" fill="url(#gsph)"/><path d="M17 16H27L26 28H18Z" fill="url(#gtrash)" stroke="#222" stroke-width="0.7"/><rect x="16" y="14" width="12" height="2.5" rx="1" fill="#bbb" stroke="#222" stroke-width="0.5"/></svg><svg class="b" style="left:361px;top:84px" width="28" height="30" viewBox="0 0 28 30"><rect x="4" y="2" width="8" height="3.5" fill="#ddd" stroke="#333" stroke-width="0.5"/><path d="M8 5V20M8 5L15 15M8 5L22 17" stroke="#111" stroke-width="0.9"/><circle cx="8" cy="23" r="5" fill="url(#gsph)"/><path d="M9 12L14 9L19 12V19L14 22L9 19Z" fill="#7fb4e4" stroke="#3a6aa0" stroke-width="0.5"/><path d="M17 15V25A5 2 0 0 0 27 25V15Z" fill="url(#gcyl)"/><ellipse cx="22" cy="15" rx="5" ry="2" fill="#b8dcf8"/></svg><svg class="b" style="left:397px;top:84px" width="28" height="30" viewBox="0 0 28 30"><rect x="11" y="1" width="8" height="3.5" fill="#ddd" stroke="#333" stroke-width="0.5"/><rect x="3" y="7" width="8" height="3.5" fill="#ddd" stroke="#333" stroke-width="0.5"/><rect x="19" y="7" width="8" height="3.5" fill="#ddd" stroke="#333" stroke-width="0.5"/><path d="M15 4.5V12M7 10.5V20M23 10.5V15" stroke="#111" stroke-width="0.9"/><circle cx="7" cy="23" r="5" fill="url(#gsph)"/><path d="M9 11L14 8L19 11V18L14 21L9 18Z" fill="#7fb4e4" stroke="#3a6aa0" stroke-width="0.5"/><path d="M18 15V25A5 2 0 0 0 28 25V15Z" fill="url(#gcyl)"/><ellipse cx="23" cy="15" rx="5" ry="2" fill="#b8dcf8"/></svg><svg class="b" style="left:433px;top:84px" width="28" height="30" viewBox="0 0 28 30"><rect x="3" y="1" width="8" height="3.5" fill="#ddd" stroke="#333" stroke-width="0.5"/><rect x="12" y="8" width="8" height="3.5" fill="#ddd" stroke="#333" stroke-width="0.5"/><path d="M7 4.5V20M7 4.5L16 11.5V15" stroke="#111" stroke-width="0.9"/><circle cx="7" cy="23" r="5" fill="url(#gsph)"/><path d="M13 15V25A5 2 0 0 0 23 25V15Z" fill="url(#gcyl)"/><ellipse cx="18" cy="15" rx="5" ry="2" fill="#b8dcf8"/></svg><svg class="b" style="left:468px;top:84px" width="28" height="30" viewBox="0 0 28 30"><rect x="3" y="1" width="8" height="3.5" fill="#ddd" stroke="#333" stroke-width="0.5"/><rect x="14" y="7" width="8" height="3.5" fill="#ddd" stroke="#333" stroke-width="0.5"/><path d="M7 4.5V20M18 10.5V15" stroke="#111" stroke-width="0.9"/><circle cx="7" cy="23" r="5" fill="url(#gsph)"/><path d="M13 15V25A5 2 0 0 0 23 25V15Z" fill="url(#gcyl)"/><ellipse cx="18" cy="15" rx="5" ry="2" fill="#b8dcf8"/></svg><svg class="b" style="left:502px;top:85px" width="28" height="28" viewBox="0 0 28 28"><rect x="1" y="1" width="26" height="25" rx="1.5" fill="#222" stroke="#777" stroke-width="0.8"/><rect x="1" y="1" width="26" height="3" fill="#888"/><rect x="4" y="7" width="7" height="3.5" fill="none" stroke="#e8e040" stroke-width="0.9"/><rect x="10" y="13" width="7" height="3.5" fill="none" stroke="#ccc" stroke-width="0.9"/><rect x="16" y="19" width="7" height="3.5" fill="none" stroke="#ccc" stroke-width="0.9"/><path d="M7 10.5V15H10M13 16.5V21H16" stroke="#ccc" stroke-width="0.8" fill="none"/></svg><svg class="b" style="left:536px;top:84px" width="32" height="30" viewBox="0 0 32 30"><path d="M3 3L9 0L15 3V10L9 13L3 10Z" fill="url(#gred)"/><path d="M9 13L12 17" stroke="#222"/><path d="M2 17L8 14L14 17V24L8 27L2 24Z" fill="#d8d8d8" stroke="#666" stroke-width="0.5"/><path d="M11 20L17 17L23 20V27L17 30L11 27Z" fill="#c8c8c8" stroke="#666" stroke-width="0.5"/><path transform="translate(21 17) scale(1.0)" d="M1 1L1 12L4 9.5L6.5 14L8.5 13L6.3 8.5L10 8.5Z" fill="#a01818" stroke="#f0f0f0" stroke-width="1"/></svg><svg class="b" style="left:569px;top:84px" width="34" height="30" viewBox="0 0 34 30"><circle cx="10" cy="9" r="8" fill="url(#gsph)"/><path d="M9 12L17 9L26 12V23L17 27L9 23Z" fill="#3a90d0" stroke="#40d040" stroke-width="1.6"/><path transform="translate(22 17) scale(1.0)" d="M1 1L1 12L4 9.5L6.5 14L8.5 13L6.3 8.5L10 8.5Z" fill="#a01818" stroke="#f0f0f0" stroke-width="1"/></svg><svg class="b" style="left:607px;top:84px" width="32" height="30" viewBox="0 0 32 30"><path d="M3 7L13 2L23 7V22L13 27L3 22Z" fill="#9a9a9a" stroke="#333" stroke-width="0.6"/><path d="M3 7L13 12L23 7M13 12V27M8 4.5L18 9.5M18 4.5L8 9.5M3 14.5L13 19.5L23 14.5" stroke="#444" stroke-width="0.8" fill="none"/><path d="M13 19.5L18 17V24.5L13 27Z" fill="#30c030"/><path transform="translate(21 17) scale(1.0)" d="M1 1L1 12L4 9.5L6.5 14L8.5 13L6.3 8.5L10 8.5Z" fill="#a01818" stroke="#f0f0f0" stroke-width="1"/></svg><svg class="b" style="left:639px;top:82px" width="32" height="32" viewBox="0 0 32 32"><ellipse cx="12" cy="21" rx="10" ry="7" fill="none" stroke="#d02020" stroke-width="2"/><path d="M28 2L14 18" stroke="#7a5a30" stroke-width="2.5"/><path d="M9 17Q13 14 16 18Q13 24 6 24Q10 22 9 17Z" fill="#f0e8c0"/><rect x="4" y="15" width="3.5" height="3.5" fill="#f0d040" stroke="#222" stroke-width="0.5"/><rect x="4" y="24" width="3.5" height="3.5" fill="#f0d040" stroke="#222" stroke-width="0.5"/><rect x="17" y="24" width="3.5" height="3.5" fill="#f0d040" stroke="#222" stroke-width="0.5"/></svg><div class="b" style="left:0px;top:124px;width:45px;height:586px;background:#444444"></div><div class="b" style="left:0px;top:0px;width:2px;height:808px;background:#5d5d5d"></div><div class="b" style="left:44px;top:124px;width:1px;height:586px;background:#363636"></div><div class="b" style="left:6px;top:132px;width:2px;height:2px;background:#5e5e5e"></div><div class="b" style="left:8px;top:135px;width:2px;height:2px;background:#5e5e5e"></div><div class="b" style="left:11px;top:132px;width:2px;height:2px;background:#5e5e5e"></div><div class="b" style="left:13px;top:135px;width:2px;height:2px;background:#5e5e5e"></div><div class="b" style="left:16px;top:132px;width:2px;height:2px;background:#5e5e5e"></div><div class="b" style="left:18px;top:135px;width:2px;height:2px;background:#5e5e5e"></div><div class="b" style="left:21px;top:132px;width:2px;height:2px;background:#5e5e5e"></div><div class="b" style="left:23px;top:135px;width:2px;height:2px;background:#5e5e5e"></div><div class="b" style="left:26px;top:132px;width:2px;height:2px;background:#5e5e5e"></div><div class="b" style="left:28px;top:135px;width:2px;height:2px;background:#5e5e5e"></div><div class="b" style="left:31px;top:132px;width:2px;height:2px;background:#5e5e5e"></div><div class="b" style="left:33px;top:135px;width:2px;height:2px;background:#5e5e5e"></div><div class="b" style="left:36px;top:132px;width:2px;height:2px;background:#5e5e5e"></div><div class="b" style="left:38px;top:135px;width:2px;height:2px;background:#5e5e5e"></div><div class="b" style="left:6px;top:139px;width:34px;height:35px;background:#464646;border:1px solid #2b2b2b;border-radius:3px"></div><div class="b" style="left:6px;top:177px;width:34px;height:34px;background:#464646;border:1px solid #2b2b2b;border-radius:3px"></div><div class="b" style="left:6px;top:214px;width:34px;height:34px;background:#464646;border:1px solid #2b2b2b;border-radius:3px"></div><div class="b" style="left:6px;top:251px;width:34px;height:34px;background:#464646;border:1px solid #2b2b2b;border-radius:3px"></div><div class="b" style="left:6px;top:288px;width:34px;height:34px;background:#464646;border:1px solid #2b2b2b;border-radius:3px"></div><div class="b" style="left:6px;top:324px;width:34px;height:35px;background:#464646;border:1px solid #2b2b2b;border-radius:3px"></div><div class="b" style="left:6px;top:362px;width:34px;height:34px;background:#464646;border:1px solid #2b2b2b;border-radius:3px"></div><div class="b" style="left:6px;top:399px;width:34px;height:34px;background:#464646;border:1px solid #2b2b2b;border-radius:3px"></div><div class="b" style="left:6px;top:436px;width:34px;height:34px;background:#464646;border:1px solid #2b2b2b;border-radius:3px"></div><div class="b" style="left:6px;top:473px;width:34px;height:35px;background:linear-gradient(#c8c8c8,#9a9a9a);border:1px solid #2b2b2b;border-radius:3px"></div><svg class="b" style="left:6px;top:139px" width="34" height="35" viewBox="0 0 34 35"><path d="M11 6L11 26L16 21.5L20 29L24 27L20 20L27 20Z" fill="#9a1a1a" stroke="#f4f4f4" stroke-width="1.3"/></svg><svg class="b" style="left:6px;top:177px" width="34" height="35" viewBox="0 0 34 35"><path d="M10 8Q17 4 24 8Q26 12 24 16M10 8Q6 14 10 18Q8 24 12 28" fill="none" stroke="#c8c8c8" stroke-width="1.4" stroke-dasharray="3 2"/><path d="M17 12L17 28L21 24.5L24 30.5L27 29L24 23L29.5 23Z" fill="#9a1a1a" stroke="#f4f4f4" stroke-width="1.2"/></svg><svg class="b" style="left:6px;top:214px" width="34" height="35" viewBox="0 0 34 35"><ellipse cx="17" cy="23" rx="11" ry="7" fill="none" stroke="#c82020" stroke-width="2"/><path d="M31 6L20 18" stroke="#7a5a30" stroke-width="2.5"/><path d="M13 19Q18 15 21 19Q18 26 9 26Q14 23 13 19Z" fill="#f0e8c0"/><rect x="7" y="17" width="4" height="4" fill="#f0d040" stroke="#222" stroke-width="0.6"/><rect x="7" y="27" width="4" height="4" fill="#f0d040" stroke="#222" stroke-width="0.6"/><rect x="20" y="27" width="4" height="4" fill="#f0d040" stroke="#222" stroke-width="0.6"/></svg><svg class="b" style="left:6px;top:251px" width="34" height="35" viewBox="0 0 34 35"><path d="M12 8L16 26H6Z" fill="#8a8a8a" opacity="0.6"/><path d="M15 6L19 26H10Z" fill="#aaa" opacity="0.7"/><path d="M21 6L28 26Q21 30 14 26Z" fill="url(#gcyl)"/><path d="M5 22L17 30" stroke="#c82020" stroke-width="3"/><path d="M19 32L13 26L20 25Z" fill="#c82020"/></svg><svg class="b" style="left:6px;top:288px" width="34" height="35" viewBox="0 0 34 35"><circle cx="17" cy="14" r="9" fill="url(#gsph)"/><path d="M8 19Q3 26 12 29Q22 32 28 25" fill="none" stroke="#c82020" stroke-width="3"/><path d="M29 20L30 29L23 27Z" fill="#c82020"/></svg><svg class="b" style="left:6px;top:324px" width="34" height="35" viewBox="0 0 34 35"><path d="M11 11L17 8L23 11V19L17 22L11 19Z" fill="#8fc4f0" stroke="#3a70b0" stroke-width="0.6"/><path d="M11 11L17 14L23 11M17 14V22" stroke="#3a70b0" stroke-width="0.5" fill="none"/><path d="M3 3L11 5L5 11Z M31 3L23 5L29 11Z M3 32L5 24L11 30Z M31 32L29 24L23 30Z" fill="#d02020"/><path d="M6 6L11 11M28 6L23 11M6 29L11 24M28 29L23 24" stroke="#d02020" stroke-width="2.5"/></svg><svg class="b" style="left:6px;top:362px" width="34" height="35" viewBox="0 0 34 35"><path d="M8 9H26V27H8Z M8 9L12 6H30V24L26 27 M26 9L30 6" fill="none" stroke="#ddd" stroke-width="1"/><circle cx="18" cy="20" r="5" fill="url(#gsph)"/><path d="M18 17V9" stroke="#30c030" stroke-width="2"/><path d="M18 7L15 12H21Z" fill="#30c030"/><path d="M14 22L9 24" stroke="#2030d0" stroke-width="2"/><path d="M22 22L26 24" stroke="#d02020" stroke-width="2"/><rect x="6.5" y="7.5" width="3" height="3" fill="#f0e040" stroke="#222" stroke-width="0.4"/><rect x="24.5" y="7.5" width="3" height="3" fill="#f0e040" stroke="#222" stroke-width="0.4"/><rect x="6.5" y="25.5" width="3" height="3" fill="#f0e040" stroke="#222" stroke-width="0.4"/><rect x="24.5" y="25.5" width="3" height="3" fill="#f0e040" stroke="#222" stroke-width="0.4"/><rect x="16.5" y="4.5" width="3" height="3" fill="#f0e040" stroke="#222" stroke-width="0.4"/><rect x="16.5" y="26.5" width="3" height="3" fill="#f0e040" stroke="#222" stroke-width="0.4"/></svg><svg class="b" style="left:6px;top:399px" width="34" height="35" viewBox="0 0 34 35"><path d="M6 22L12 15L28 15L30 27L10 30Z" fill="url(#gsph)"/><path d="M8 21L28 21M10 26L30 24M15 15L14 30M22 15L21 29" stroke="#cfe8ff" stroke-width="0.8"/><path d="M18 16V5" stroke="#d02020" stroke-width="2"/><path d="M18 3L15 8H21Z" fill="#d02020"/><rect x="16.5" y="14.5" width="3" height="3" fill="#f0e040" stroke="#222" stroke-width="0.4"/><rect x="12.5" y="19.5" width="3" height="3" fill="#f0e040" stroke="#222" stroke-width="0.4"/><rect x="20.5" y="19.5" width="3" height="3" fill="#f0e040" stroke="#222" stroke-width="0.4"/></svg><svg class="b" style="left:6px;top:436px" width="34" height="35" viewBox="0 0 34 35"><circle cx="17" cy="19" r="4.5" fill="url(#gsph)"/><path d="M17 15V8" stroke="#30c030" stroke-width="2.5"/><path d="M17 5L13.5 11H20.5Z" fill="#30c030"/><path d="M13 20L6 22" stroke="#2030d0" stroke-width="2.5"/><path d="M3 23L8 19V25Z" fill="#2030d0"/><path d="M20 22L25 27" stroke="#d02020" stroke-width="2.5"/><path d="M28 30L22 28L27 23Z" fill="#d02020"/></svg><svg class="b" style="left:6px;top:473px" width="34" height="35" viewBox="0 0 34 35"><g transform="translate(3 3) scale(1.0) rotate(-10 12 10)"><circle cx="7" cy="6" r="5.5" fill="url(#greel)" stroke="#222" stroke-width="0.6"/><circle cx="7" cy="6" r="1.8" fill="#222"/><circle cx="15" cy="6" r="5.5" fill="url(#greel)" stroke="#222" stroke-width="0.6"/><circle cx="15" cy="6" r="1.8" fill="#222"/><rect x="4" y="11" width="16" height="8" rx="1.5" fill="#1a1a1a"/><path d="M20 13L25 11V19L20 17Z" fill="#2a2a2a"/><path d="M10 19L7 27M12 19V27M14 19L17 27" stroke="#111" stroke-width="1"/></g><path d="M12 30L28 24" stroke="#c82020" stroke-width="3"/><path d="M31 23L25 20L26 28Z M9 31L15 27L14 34Z" fill="#c82020"/></svg><div class="b" style="left:7px;top:522px;width:33px;height:32px;background:linear-gradient(#ececec,#b8b8b8);border:1px solid #2d2d2d;border-radius:2px"></div><div class="b" style="left:7px;top:560px;width:33px;height:32px;background:linear-gradient(#ececec,#b8b8b8);border:1px solid #2d2d2d;border-radius:2px"></div><div class="b" style="left:7px;top:597px;width:33px;height:33px;background:linear-gradient(#ececec,#b8b8b8);border:1px solid #2d2d2d;border-radius:2px"></div><div class="b" style="left:7px;top:636px;width:33px;height:33px;background:linear-gradient(#ececec,#b8b8b8);border:1px solid #2d2d2d;border-radius:2px"></div><svg class="b" style="left:14px;top:531px" width="18" height="11" viewBox="0 0 18 11"><path d="M9 1L17 5.5L9 10L1 5.5Z M5 3.25L13 7.75M13 3.25L5 7.75" fill="none" stroke="#222" stroke-width="1.2"/></svg><div class="b" style="left:10px;top:545px;width:8px;height:6px;border-left:1px solid #3050d0;border-bottom:1px solid #d02020"></div><div class="b" style="left:23px;top:560px;width:1px;height:32px;background:#444"></div><div class="b" style="left:7px;top:576px;width:33px;height:1px;background:#444"></div><div class="b" style="left:12px;top:568px;width:10px;height:2px;background:#222"></div><div class="b" style="left:16px;top:564px;width:2px;height:10px;background:#222"></div><div class="b" style="left:12px;top:584px;width:10px;height:2px;background:#222"></div><div class="b" style="left:16px;top:580px;width:2px;height:10px;background:#222"></div><div class="b" style="left:28px;top:584px;width:10px;height:2px;background:#222"></div><div class="b" style="left:32px;top:580px;width:2px;height:10px;background:#222"></div><svg class="b" style="left:25px;top:563px" width="14" height="9" viewBox="0 0 18 11"><path d="M9 1L17 5.5L9 10L1 5.5Z M5 3.25L13 7.75M13 3.25L5 7.75" fill="none" stroke="#222" stroke-width="1.2"/></svg><div class="b" style="left:7px;top:597px;width:16px;height:33px;background:#262626;border:1px solid #2d2d2d"></div><div class="b" style="left:11px;top:601px;width:7px;height:1px;background:#ddd"></div><div class="b" style="left:11px;top:605px;width:7px;height:1px;background:#ddd"></div><div class="b" style="left:11px;top:609px;width:7px;height:1px;background:#ddd"></div><div class="b" style="left:11px;top:613px;width:7px;height:1px;background:#ddd"></div><div class="b" style="left:11px;top:617px;width:7px;height:1px;background:#ddd"></div><div class="b" style="left:11px;top:621px;width:7px;height:1px;background:#ddd"></div><svg class="b" style="left:24px;top:608px" width="14" height="9" viewBox="0 0 18 11"><path d="M9 1L17 5.5L9 10L1 5.5Z M5 3.25L13 7.75M13 3.25L5 7.75" fill="none" stroke="#222" stroke-width="1.2"/></svg><svg class="b" style="left:14px;top:639px" width="18" height="11" viewBox="0 0 18 11"><path d="M9 1L17 5.5L9 10L1 5.5Z M5 3.25L13 7.75M13 3.25L5 7.75" fill="none" stroke="#222" stroke-width="1.2"/></svg><div class="b" style="left:7px;top:652px;width:33px;height:1px;background:#444"></div><svg class="b" style="left:9px;top:654px" width="30" height="14"><path d="M2 8 C7 0 12 0 15 7 S23 14 28 6" fill="none" stroke="#2a60c0" stroke-width="1.3"/><path d="M10 1V13" stroke="#d02020"/></svg><div class="b" style="left:9px;top:675px;width:31px;height:32px;background:linear-gradient(#4a4a4a,#262626);border:1px solid #1f1f1f;border-radius:4px"></div><svg class="b" style="left:13px;top:679px" width="22" height="24"><path d="M6 21C2 14 4 6 11 3C9 8 14 9 17 5C19 11 17 18 12 21C14 16 11 13 8 15" fill="none" stroke="#d8d8d8" stroke-width="1.6"/></svg><div class="b" style="left:45px;top:124px;width:1394px;height:44px;background:#444444"></div><div class="t" style="left:55px;top:132px;font-size:11px;color:#d0d0d0;letter-spacing:-0.1px">View</div><div class="t" style="left:92px;top:132px;font-size:11px;color:#d0d0d0;letter-spacing:-0.1px">Shading</div><div class="t" style="left:145px;top:132px;font-size:11px;color:#d0d0d0;letter-spacing:-0.1px">Lighting</div><div class="t" style="left:197px;top:132px;font-size:11px;color:#d0d0d0;letter-spacing:-0.1px">Show</div><div class="t" style="left:238px;top:132px;font-size:11px;color:#d0d0d0;letter-spacing:-0.1px">Renderer</div><div class="t" style="left:298px;top:132px;font-size:11px;color:#d0d0d0;letter-spacing:-0.1px">Panels</div><div class="b" style="left:52px;top:149px;width:1px;height:17px;background:#6a6a6a"></div><div class="b" style="left:50px;top:154px;width:5px;height:7px;border:1px solid #707070;border-radius:2px"></div><div class="b" style="left:162px;top:149px;width:1px;height:17px;background:#6a6a6a"></div><div class="b" style="left:160px;top:154px;width:5px;height:7px;border:1px solid #707070;border-radius:2px"></div><div class="b" style="left:313px;top:149px;width:1px;height:17px;background:#6a6a6a"></div><div class="b" style="left:311px;top:154px;width:5px;height:7px;border:1px solid #707070;border-radius:2px"></div><div class="b" style="left:464px;top:149px;width:1px;height:17px;background:#6a6a6a"></div><div class="b" style="left:462px;top:154px;width:5px;height:7px;border:1px solid #707070;border-radius:2px"></div><div class="b" style="left:495px;top:149px;width:1px;height:17px;background:#6a6a6a"></div><div class="b" style="left:493px;top:154px;width:5px;height:7px;border:1px solid #707070;border-radius:2px"></div><div class="b" style="left:171px;top:149px;width:17px;height:17px;background:#5e5e5e;border:1px solid #2e2e2e;border-radius:3px"></div><div class="b" style="left:342px;top:149px;width:17px;height:17px;background:#5e5e5e;border:1px solid #2e2e2e;border-radius:3px"></div><div class="b" style="left:382px;top:149px;width:17px;height:17px;background:#5e5e5e;border:1px solid #2e2e2e;border-radius:3px"></div><div class="b" style="left:231px;top:149px;width:17px;height:17px;background:linear-gradient(#8a8a8a,#6a6a6a);border:1px solid #2e2e2e;border-radius:3px"></div><div class="b" style="left:504px;top:149px;width:15px;height:17px;background:#262626;border-radius:3px"></div><div class="b" style="left:524px;top:149px;width:16px;height:17px;background:#262626;border-radius:3px"></div><div class="b" style="left:544px;top:149px;width:16px;height:17px;background:#262626;border-radius:3px"></div><svg class="b" style="left:59px;top:149px" width="18" height="17" viewBox="0 0 18 17"><circle cx="5" cy="5" r="4" fill="url(#greel)" stroke="#222" stroke-width="0.5"/><circle cx="5" cy="5" r="1.3" fill="#222"/><circle cx="11" cy="5" r="4" fill="url(#greel)" stroke="#222" stroke-width="0.5"/><circle cx="11" cy="5" r="1.3" fill="#222"/><rect x="3" y="9" width="11" height="6" rx="1.5" fill="#151515"/><path d="M14 10L18 9V15L14 14Z" fill="#222"/></svg><svg class="b" style="left:80px;top:149px" width="17" height="17" viewBox="0 0 17 17"><circle cx="4" cy="4" r="3.5" fill="url(#greel)" stroke="#222" stroke-width="0.5"/><circle cx="9" cy="4" r="3.5" fill="url(#greel)" stroke="#222" stroke-width="0.5"/><rect x="2" y="8" width="8" height="6" rx="1" fill="#151515"/><rect x="9" y="5" width="7" height="11" fill="#eee" stroke="#333" stroke-width="0.5"/><path d="M10.5 8H15M10.5 10H15M10.5 12H15M10.5 14H15" stroke="#333" stroke-width="0.7"/></svg><svg class="b" style="left:100px;top:149px" width="16" height="17" viewBox="0 0 16 17"><rect x="1" y="2" width="14" height="13" fill="#f0f0f0" stroke="#666" stroke-width="0.6"/><path d="M4 5H7V13H4Z" fill="none" stroke="#999" stroke-width="0.6"/><path d="M9 1H13V13L11 11L9 13Z" fill="#30a030"/></svg><svg class="b" style="left:120px;top:149px" width="17" height="17" viewBox="0 0 17 17"><path d="M2 12L8 15L16 10L10 7Z" fill="#ddd" stroke="#555" stroke-width="0.5"/><path d="M4 11L6 2L15 4L13 12Z" fill="#60a0d0" stroke="#eee" stroke-width="0.8"/><path d="M5 10L9 6L13 11Z" fill="#50b030"/></svg><svg class="b" style="left:139px;top:149px" width="17" height="17" viewBox="0 0 17 17"><path d="M6 2V10M2 6H10" stroke="#d02020" stroke-width="2"/><path d="M6 0L4 3H8ZM0 6L3 4V8ZM12 6L9 4V8ZM6 12L4 9H8Z" fill="#d02020"/><circle cx="11.5" cy="8" r="4" fill="#eee" stroke="#c02020" stroke-width="1.2"/><path d="M9.5 8H13.5M11.5 6V10" stroke="#c02020" stroke-width="1"/><path d="M9 11L3 16" stroke="#c8a030" stroke-width="1.8"/></svg><svg class="b" style="left:171px;top:149px" width="17" height="17" viewBox="0 0 17 17"><path d="M8.5 3L15 8L8.5 13L2 8Z M5.25 5.5L11.75 10.5M11.75 5.5L5.25 10.5" fill="#a8c8e8" stroke="#f4f8fc" stroke-width="0.9"/></svg><svg class="b" style="left:191px;top:149px" width="16" height="17" viewBox="0 0 16 17"><rect x="1" y="2" width="14" height="13" fill="#f2f2f2" stroke="#555" stroke-width="0.5"/><rect x="1" y="4" width="14" height="9" fill="#222"/><rect x="3" y="5" width="3" height="7" fill="#8ab8e0"/><rect x="7" y="5" width="3" height="7" fill="#8ab8e0"/><rect x="11" y="5" width="3" height="7" fill="#8ab8e0"/></svg><svg class="b" style="left:211px;top:149px" width="16" height="17" viewBox="0 0 16 17"><rect x="1" y="2" width="14" height="13" fill="#f2f2f2" stroke="#555" stroke-width="0.5"/><circle cx="8" cy="8.5" r="5" fill="url(#gsph)"/></svg><svg class="b" style="left:231px;top:149px" width="17" height="17" viewBox="0 0 17 17"><circle cx="8.5" cy="8.5" r="5" fill="#d0d0d0" stroke="#222" stroke-width="1"/></svg><svg class="b" style="left:251px;top:149px" width="16" height="17" viewBox="0 0 16 17"><rect x="1" y="2" width="14" height="13" fill="#c8c8c8" stroke="#555" stroke-width="0.5"/><path d="M1 2L15 15M15 2L1 15M8 2V15M1 8.5H15" stroke="#333" stroke-width="0.7"/></svg><svg class="b" style="left:271px;top:149px" width="16" height="17" viewBox="0 0 16 17"><rect x="1" y="2" width="14" height="13" fill="#e8f0e8" stroke="#2a9a2a" stroke-width="1.4"/><circle cx="5" cy="7" r="2" fill="#3a80c0"/><circle cx="10.5" cy="6" r="2" fill="#3a80c0"/><circle cx="7.5" cy="11" r="2" fill="#3a80c0"/></svg><svg class="b" style="left:291px;top:149px" width="16" height="17" viewBox="0 0 16 17"><rect x="1" y="2" width="14" height="13" fill="#e8f0e8" stroke="#2a9a2a" stroke-width="1.4"/><path d="M4 5H12M8 5V13M6.5 13H9.5" stroke="#111" stroke-width="1.6"/></svg><svg class="b" style="left:322px;top:149px" width="16" height="17" viewBox="0 0 16 17"><path d="M2 6L6 3H14V11L10 14H2Z M2 6H10V14M10 6L14 3" fill="none" stroke="#e0e0e0" stroke-width="0.9"/></svg><svg class="b" style="left:342px;top:149px" width="17" height="17" viewBox="0 0 17 17"><path d="M3 6L7 3H14V11L10 14H3Z" fill="#6aa0d8"/><path d="M3 6H10V14M10 6L14 3" fill="none" stroke="#a8d0f4" stroke-width="0.7"/></svg><svg class="b" style="left:362px;top:149px" width="16" height="17" viewBox="0 0 16 17"><path d="M2 6L6 3H14V11L10 14H2Z" fill="#8ab8e4" stroke="#eee" stroke-width="0.9"/><path d="M2 6H10V14M10 6L14 3" fill="none" stroke="#eee" stroke-width="0.9"/></svg><svg class="b" style="left:382px;top:149px" width="17" height="17" viewBox="0 0 17 17"><defs><pattern id="chk" width="4" height="4" patternUnits="userSpaceOnUse"><rect width="2" height="2" fill="#222"/><rect x="2" y="2" width="2" height="2" fill="#222"/><rect x="2" width="2" height="2" fill="#e8e8e8"/><rect y="2" width="2" height="2" fill="#e8e8e8"/></pattern></defs><circle cx="8.5" cy="8.5" r="6.5" fill="url(#chk)"/></svg><svg class="b" style="left:403px;top:149px" width="15" height="17" viewBox="0 0 15 17"><defs><radialGradient id="gyl"><stop offset="0" stop-color="#ffff70"/><stop offset="0.45" stop-color="#e0e000"/><stop offset="1" stop-color="#444400" stop-opacity="0"/></radialGradient></defs><circle cx="7.5" cy="8.5" r="7" fill="url(#gyl)"/></svg><svg class="b" style="left:422px;top:149px" width="15" height="17" viewBox="0 0 15 17"><defs><radialGradient id="ggs" cx="0.4" cy="0.35"><stop offset="0" stop-color="#f4f4f4"/><stop offset="0.7" stop-color="#8a8a8a"/><stop offset="1" stop-color="#555"/></radialGradient><radialGradient id="ggd" cx="0.4" cy="0.35"><stop offset="0" stop-color="#fff0b0"/><stop offset="0.6" stop-color="#a07a20"/><stop offset="1" stop-color="#3a2a08"/></radialGradient></defs><circle cx="7.5" cy="7" r="6" fill="url(#ggs)"/></svg><svg class="b" style="left:442px;top:149px" width="16" height="17" viewBox="0 0 16 17"><circle cx="8" cy="8" r="7" fill="url(#ggd)"/></svg><svg class="b" style="left:472px;top:149px" width="18" height="17" viewBox="0 0 18 17"><rect x="1.5" y="2.5" width="13" height="10" fill="none" stroke="#30c030" stroke-dasharray="2 1.5"/><path transform="translate(9 7) scale(0.8)" d="M1 1L1 12L4 9.5L6.5 14L8.5 13L6.3 8.5L10 8.5Z" fill="#a01818" stroke="#f0f0f0" stroke-width="1"/></svg><svg class="b" style="left:505px;top:149px" width="14" height="17" viewBox="0 0 14 17"><path d="M2 5L6 2H12V10L8 14H2Z" fill="#777" stroke="#ccc" stroke-width="0.8"/><path d="M2 5H8V14M8 5L12 2" fill="none" stroke="#ccc" stroke-width="0.8"/></svg><svg class="b" style="left:525px;top:149px" width="15" height="17" viewBox="0 0 15 17"><rect x="1.5" y="1.5" width="9" height="9" fill="none" stroke="#ccc"/><rect x="4.5" y="5.5" width="9" height="9" fill="none" stroke="#ccc"/></svg><svg class="b" style="left:545px;top:149px" width="15" height="17" viewBox="0 0 15 17"><path d="M4 8.5L11 4M4 8.5L11 13" stroke="#ddd" stroke-width="1"/><circle cx="4" cy="8.5" r="2.2" fill="none" stroke="#ddd" stroke-width="1.2"/><circle cx="11" cy="4" r="2.2" fill="none" stroke="#ddd" stroke-width="1.2"/><circle cx="11" cy="13" r="2.2" fill="none" stroke="#ddd" stroke-width="1.2"/></svg><svg class="b" style="left:0;top:0" width="1439" height="808"><defs><clipPath id="vp"><rect x="48" y="168" width="1385" height="542"/></clipPath></defs><rect x="48" y="168" width="1385" height="542" fill="#a1a1a1"/><g clip-path="url(#vp)"><path d="M393.9 174.9L-978.5 927.4M393.9 174.9L1430.2 423.8M421.5 181.5L-961.2 980.5M372.9 186.4L1442.3 453.5M449.9 188.3L-942.4 1038.5M350.6 198.6L1455.4 486.0M479.3 195.4L-921.7 1102.3M327.1 211.5L1469.8 521.6M509.6 202.7L-898.8 1172.7M302.2 225.2L1485.7 560.9M541.0 210.2L-873.3 1250.9M275.7 239.7L1503.3 604.5M573.4 218.0L-845.0 1338.3M247.5 255.1L1523.0 653.0M607.0 226.0L-813.1 1436.5M217.5 271.6L1545.0 707.4M641.7 234.4L-777.0 1547.6M185.5 289.2L1569.8 768.9M677.7 243.0L-735.7 1674.4M151.1 308.0L1598.1 838.8M715.0 252.0L-688.2 1820.6M114.3 328.2L1630.6 919.1M753.7 261.3L-632.9 1990.8M74.7 349.9L1668.3 1012.2M835.6 280.9L-489.6 2432.0M-14.2 398.7L1765.1 1251.6M879.0 291.4L-394.4 2725.0M-64.4 426.2L1828.8 1409.1M924.1 302.2L-275.8 3089.9M-119.1 456.2L1907.5 1603.6M971.1 313.5L-124.0 3557.0M-178.9 489.0L2007.2 1850.0M1020.0 325.2L77.2 4176.3M-244.5 525.0L2137.5 2172.1M1071.1 337.5L356.7 5036.4M-316.9 564.7L2315.1 2611.3M1124.4 350.3L771.1 6311.8M-397.2 608.7L2571.7 3245.6M1180.1 363.7L1449.4 8399.1M-486.7 657.8L2974.8 4242.0M1238.3 377.7L2760.9 12435.4M-587.2 712.9L3699.8 6034.3M1299.3 392.3L4228.8 13767.3M-700.6 775.1L5389.3 10211.0M1363.2 407.7L5528.6 13767.9M-829.9 846.0L5439.6 13767.9M1430.2 423.8L6828.4 13768.6M-978.5 927.4L3193.5 13766.8" stroke="#747474" stroke-width="1" fill="none"/><path d="M793.9 270.9L-567.7 2191.6M32.0 373.3L1712.5 1121.5" stroke="#000" stroke-width="2" fill="none"/><defs><linearGradient id="vsh" gradientUnits="userSpaceOnUse" x1="560" y1="300" x2="590" y2="460"><stop offset="0" stop-color="#575652"/><stop offset="0.5" stop-color="#4e4d4a"/><stop offset="1" stop-color="#42413e"/></linearGradient><linearGradient id="vla" gradientUnits="userSpaceOnUse" x1="515" y1="355" x2="495" y2="425"><stop offset="0" stop-color="#4a3328"/><stop offset="0.6" stop-color="#7a5644"/><stop offset="1" stop-color="#b58a76"/></linearGradient><linearGradient id="vra" gradientUnits="userSpaceOnUse" x1="610" y1="370" x2="640" y2="500"><stop offset="0" stop-color="#8a5e46"/><stop offset="0.45" stop-color="#c08468"/><stop offset="1" stop-color="#9a7060"/></linearGradient><linearGradient id="vfa" gradientUnits="userSpaceOnUse" x1="545" y1="260" x2="590" y2="330"><stop offset="0" stop-color="#caa088"/><stop offset="0.45" stop-color="#b08068"/><stop offset="1" stop-color="#5a3e30"/></linearGradient><linearGradient id="vne" gradientUnits="userSpaceOnUse" x1="560" y1="310" x2="595" y2="340"><stop offset="0" stop-color="#5a3e30"/><stop offset="1" stop-color="#b88a70"/></linearGradient><linearGradient id="vpa" gradientUnits="userSpaceOnUse" x1="515" y1="450" x2="610" y2="600"><stop offset="0" stop-color="#14161b"/><stop offset="1" stop-color="#1d2028"/></linearGradient></defs><path d="M514.7 340.0C515.7 342.1 519.2 358.8 520.9 364.8C522.5 370.8 525.2 372.6 524.6 375.9C524.0 379.2 519.9 381.3 517.2 384.6C514.5 387.9 510.3 391.6 508.5 395.7C506.7 399.8 507.0 404.4 506.6 409.3C506.2 414.2 507.1 422.1 506.0 425.4C504.9 428.7 501.4 428.8 499.8 429.2C498.2 429.6 497.7 429.5 496.1 427.9C494.6 426.2 491.1 423.0 490.5 419.3C489.9 415.6 491.5 409.5 492.4 405.6C493.3 401.7 494.9 399.0 496.1 395.7C497.3 392.4 498.2 390.1 499.8 385.8C501.4 381.5 503.5 375.3 506.0 369.7C508.5 364.1 513.2 357.3 514.7 352.4C516.2 347.4 513.7 337.9 514.7 340.0Z" fill="url(#vla)"/><path d="M606.8 366.0C611.2 361.5 630.0 357.9 635.3 365.0C640.6 372.1 637.5 395.6 638.4 408.9C639.3 422.2 639.8 434.2 640.5 444.7C641.2 455.2 641.0 464.7 642.6 472.1C644.2 479.5 648.9 484.8 650.0 489.0C651.1 493.2 650.2 495.3 649.0 497.4C647.8 499.5 645.4 499.2 642.6 501.6C639.8 504.1 634.4 510.7 632.1 512.1C629.8 513.5 629.6 512.5 628.9 510.0C628.2 507.6 630.2 499.5 627.9 497.4C625.6 495.3 618.6 497.4 615.3 497.4C612.0 497.4 608.6 498.5 607.9 497.4C607.2 496.3 608.4 493.8 611.0 491.0C613.6 488.2 621.4 486.4 623.7 480.5C626.0 474.6 625.8 467.2 624.7 455.3C623.7 443.4 620.0 419.4 617.4 408.9C614.8 398.4 610.8 399.2 609.0 392.1C607.2 385.0 602.4 370.5 606.8 366.0Z" fill="url(#vra)"/><path d="M527.0 436.0C528.7 432.2 528.2 441.4 531.3 444.2C534.4 447.0 538.9 450.4 545.5 452.8C552.1 455.2 562.7 458.0 571.2 458.5C579.8 459.0 590.2 457.9 596.8 455.6C603.4 453.4 608.4 444.5 611.0 445.0C613.6 445.5 612.9 451.5 612.4 458.5C611.9 465.5 609.4 477.4 608.2 486.9C607.0 496.4 606.0 505.9 605.3 515.4C604.6 524.9 604.6 534.4 603.9 543.9C603.2 553.4 602.8 561.9 601.1 572.3C599.4 582.7 595.6 598.9 593.9 606.5C592.2 614.1 596.1 615.5 591.1 617.9C586.1 620.3 568.3 621.2 564.0 620.7C559.7 620.2 565.0 618.3 565.5 615.0C566.0 611.7 566.7 610.3 566.9 600.8C567.1 591.3 567.1 567.1 566.9 558.1C566.7 549.1 568.4 549.1 565.5 546.7C562.6 544.3 553.1 545.8 549.8 543.9C546.5 542.0 548.6 538.6 545.5 535.3C542.4 532.0 536.0 527.7 531.3 523.9C526.6 520.1 520.4 516.9 517.1 512.6C513.8 508.3 511.6 503.1 511.4 498.3C511.2 493.6 514.1 489.3 515.7 484.1C517.4 478.9 519.4 475.0 521.3 467.0C523.2 459.0 525.3 439.8 527.0 436.0Z" fill="url(#vpa)"/><path d="M566.9 596.0C572.0 592.8 592.0 592.4 596.0 596.0C600.0 599.6 596.4 613.8 591.1 617.9C585.8 622.0 568.3 621.2 564.0 620.7C559.7 620.2 565.0 619.1 565.5 615.0C566.0 610.9 561.8 599.2 566.9 596.0Z" fill="#1f232b"/><path d="M545.0 540.0C549.3 539.5 562.1 544.2 565.5 546.7C568.9 549.2 567.9 552.8 565.5 555.3C563.1 557.8 556.2 561.5 551.0 562.0C545.8 562.5 536.1 560.2 534.2 558.1C532.4 556.0 538.1 552.6 539.9 549.6C541.7 546.6 540.7 540.5 545.0 540.0Z" fill="#1a1a1c"/><path d="M564.0 614.0C569.1 610.8 587.2 610.3 591.5 613.0C595.8 615.7 595.1 626.8 590.0 630.0C584.9 633.2 565.3 634.7 561.0 632.0C556.7 629.3 558.9 617.2 564.0 614.0Z" fill="#1a1a1c"/><path d="M534.2 557.1C537.7 557.1 545.8 561.5 551.0 561.0C556.2 560.5 563.6 553.8 565.5 554.3C567.4 554.8 565.0 560.5 562.6 563.8C560.2 567.0 555.0 571.7 551.2 573.8C547.4 575.9 543.5 577.3 539.9 576.6C536.3 575.9 531.6 572.1 529.9 569.5C528.2 566.9 529.2 563.0 529.9 560.9C530.6 558.8 530.7 557.1 534.2 557.1Z" fill="#e6e6e6"/><path d="M561.0 628.0C563.5 627.6 570.1 630.3 575.0 630.0C579.9 629.7 587.8 626.1 590.2 626.0C592.7 625.9 590.7 625.9 589.7 629.3C588.7 632.7 587.1 642.5 584.0 646.3C580.9 650.1 575.0 652.0 571.2 652.0C567.4 652.0 563.1 649.6 561.2 646.3C559.3 643.0 559.8 635.1 559.8 632.1C559.8 629.1 558.5 628.4 561.0 628.0Z" fill="#ebebeb"/><path d="M531.2 299.8C536.4 297.4 540.2 296.2 543.0 299.8C545.8 303.4 547.2 317.0 548.0 321.5C548.8 326.0 544.5 323.2 548.0 326.7C551.5 330.2 562.6 340.6 569.3 342.3C576.0 344.0 583.2 341.3 588.4 337.0C593.6 332.7 595.0 318.0 600.5 316.3C606.0 314.6 615.5 322.9 621.3 326.7C627.1 330.4 632.3 334.8 635.2 338.8C638.1 342.9 638.4 347.2 638.7 351.0C639.0 354.8 637.5 358.8 636.9 361.3C636.3 363.8 637.9 364.9 635.3 365.8C632.7 366.7 626.0 366.1 621.3 366.5C616.5 366.9 609.6 363.6 606.8 367.9C604.0 372.2 605.1 383.5 604.7 392.1C604.4 400.7 603.7 412.5 604.7 419.5C605.8 426.5 610.0 429.6 611.0 434.2C612.0 438.8 613.4 443.5 611.0 447.1C608.6 450.7 603.4 453.7 596.8 455.6C590.2 457.5 579.8 459.0 571.2 458.5C562.7 458.0 552.1 455.2 545.5 452.8C538.9 450.4 534.1 448.0 531.3 444.2C528.5 440.4 528.8 437.1 528.5 430.0C528.2 422.9 529.5 410.1 529.5 401.9C529.5 393.7 529.7 386.7 528.3 380.9C526.9 375.1 522.9 372.8 520.9 367.2C518.9 361.6 517.7 352.5 516.5 347.5C515.3 342.5 514.9 341.1 513.9 337.0C512.9 332.9 510.7 326.9 510.4 323.2C510.1 319.4 508.6 318.4 512.1 314.5C515.6 310.6 526.1 302.2 531.2 299.8Z" fill="url(#vsh)" stroke="#2e2c2a" stroke-width="0.8"/><path d="M546.0 312.0C548.3 310.6 555.2 318.0 560.0 318.0C564.8 318.0 570.0 315.3 574.5 312.0C579.0 308.7 583.8 300.6 586.7 298.0C589.6 295.4 590.3 293.9 592.0 296.7C593.7 299.4 595.6 310.4 597.0 314.5C598.4 318.6 601.9 317.8 600.5 321.5C599.1 325.2 593.6 333.5 588.4 337.0C583.2 340.5 576.4 344.0 569.3 342.3C562.2 340.6 549.9 331.8 546.0 326.7C542.1 321.6 543.7 313.4 546.0 312.0Z" fill="url(#vne)"/><path d="M567.6 247.8C573.4 246.1 577.8 248.8 581.5 250.4C585.2 252.0 588.2 253.8 590.1 257.3C592.0 260.8 592.1 266.9 592.7 271.2C593.3 275.5 593.0 281.1 593.6 283.3C594.2 285.5 596.1 283.4 596.5 284.5C596.9 285.6 597.0 287.3 596.2 290.0C595.5 292.7 593.6 298.1 592.0 300.7C590.4 303.3 589.6 303.0 586.7 305.9C583.8 308.8 579.4 313.7 574.5 318.0C569.6 322.3 561.2 329.9 557.2 331.9C553.2 333.9 552.2 331.8 550.3 330.1C548.4 328.4 546.6 325.0 545.9 321.5C545.2 318.0 546.9 313.4 545.9 309.3C544.9 305.2 540.8 300.7 539.9 297.2C539.0 293.7 540.3 292.8 540.7 288.5C541.1 284.2 541.5 275.8 542.5 271.2C543.5 266.6 542.6 264.7 546.8 260.8C551.0 256.9 561.8 249.5 567.6 247.8Z" fill="url(#vfa)"/><path d="M567.6 246.8C573.4 245.1 577.8 247.8 581.5 249.4C585.2 251.0 588.1 252.7 590.1 256.3C592.1 259.9 592.6 266.8 593.2 271.2C593.9 275.6 594.5 279.9 594.0 283.0C593.5 286.1 591.3 290.2 590.0 290.0C588.7 289.8 588.0 285.0 586.0 282.0C584.0 279.0 581.3 274.7 578.0 272.0C574.7 269.3 570.2 267.2 566.0 266.0C561.8 264.8 556.8 264.6 553.0 265.0C549.2 265.4 544.3 269.6 543.3 268.7C542.3 267.8 542.8 263.4 546.8 259.8C550.8 256.2 561.8 248.5 567.6 246.8Z" fill="#56402f"/><path d="M541.0 295.0C541.5 293.8 547.2 293.5 549.0 294.0C550.8 294.5 552.5 296.8 552.0 298.0C551.5 299.2 547.8 301.5 546.0 301.0C544.2 300.5 540.5 296.2 541.0 295.0Z" fill="#4a3a34"/><path d="M557.0 300.0C557.7 299.0 563.7 298.7 566.0 299.0C568.3 299.3 571.7 301.0 571.0 302.0C570.3 303.0 564.3 305.3 562.0 305.0C559.7 304.7 556.3 301.0 557.0 300.0Z" fill="#4a3a34"/><path d="M547 304Q551 310 551 316L547 317Z" fill="#d8b098" opacity="0.6"/><path d="M546 321Q551 323 556 321" stroke="#6a3a30" stroke-width="1.2" fill="none"/><path d="M531 446Q560 462 606 452" stroke="#0a0a0c" stroke-width="2.5" fill="none"/></g></svg><div class="b" style="left:45px;top:168px;width:3px;height:542px;background:#444"></div><svg class="b" style="left:48px;top:650px" width="50" height="50" viewBox="0 0 50 50"><path d="M25 34V24" stroke="#30e030" stroke-width="1.3"/><path d="M25 34L37 39.5" stroke="#f04040" stroke-width="1.1"/><path d="M25 34L18 42" stroke="#1a1ae0" stroke-width="1.1"/></svg><div class="t" style="left:69px;top:660px;font-size:11px;color:#30e030;font-weight:bold">Y</div><div class="t" style="left:83px;top:677px;font-size:11px;color:#f01010;font-weight:bold">X</div><div class="t" style="left:61px;top:680px;font-size:11px;color:#1010d0;font-weight:bold">Z</div><div class="t" style="left:503px;top:689px;font-size:11px;color:#0e5a1e;font-weight:bold">persp</div><div class="b" style="left:859px;top:129px;width:563px;height:579px;background:linear-gradient(90deg,#c4ccd4 0%,#b0bac4 8%,#74828e 18%,#46525e 30%,#3c4854 55%,#44505c 80%,#4e5a66 100%);border:1px solid #1c2128;border-radius:8px 8px 5px 5px;box-shadow:-3px 0 7px rgba(0,0,0,0.45)"></div><div class="b" style="left:860px;top:130px;width:561px;height:27px;background:radial-gradient(ellipse 70px 9px at 85px 13px,rgba(235,240,245,0.55),rgba(0,0,0,0)),radial-gradient(ellipse 60px 8px at 420px 6px,rgba(150,165,180,0.35),rgba(0,0,0,0)),radial-gradient(ellipse 40px 10px at 170px 16px,rgba(140,155,170,0.25),rgba(0,0,0,0)),radial-gradient(ellipse 50px 8px at 300px 20px,rgba(130,145,160,0.2),rgba(0,0,0,0)),linear-gradient(90deg,rgba(220,228,236,0.6) 0%,rgba(200,210,220,0.35) 10%,rgba(0,0,0,0) 25%);border-top:1px solid #d8e0e8;border-radius:7px 7px 0 0"></div><div class="b" style="left:865px;top:157px;width:551px;height:545px;border:1px solid #dde6ee"></div><div class="b" style="left:866px;top:158px;width:549px;height:543px;background:#2b2b2b;border:2px solid #262626"></div><div class="b" style="left:868px;top:160px;width:545px;height:539px;background:#2b2b2b;border:1px solid #6e6e6e"></div><svg class="b" style="left:867px;top:134px" width="17" height="19" viewBox="0 0 17 19"><rect x="0.5" y="0.5" width="16" height="18" rx="2" fill="#1a1a1a" stroke="#666" stroke-width="0.6"/><path d="M5 16C2 11 4 5 9 3C8 6 11 7 13 4C14 9 13 14 9 16C10 12 8 10 6 12" fill="none" stroke="#e8e8e8" stroke-width="1.1"/></svg><div class="t" style="left:888px;top:138px;font-size:12px;color:#0a0a0a;text-shadow:0 0 5px rgba(235,240,245,0.9),0 0 9px rgba(235,240,245,0.7)">Render View</div><div class="b" style="left:1312px;top:131px;width:28px;height:18px;background:linear-gradient(#e4eaf0 0%,#c8d2dc 45%,#9aa8b6 55%,#b8c4d0 100%);border:1px solid #4a5560;border-radius:0 0 0 4px"></div><div class="b" style="left:1319px;top:141px;width:12px;height:4px;background:#fff;border:1px solid #333"></div><div class="b" style="left:1340px;top:131px;width:28px;height:18px;background:linear-gradient(#e4eaf0 0%,#c8d2dc 45%,#9aa8b6 55%,#b8c4d0 100%);border:1px solid #4a5560"></div><div class="b" style="left:1348px;top:134px;width:12px;height:10px;border:2px solid #fff;border-top-width:3px;outline:1px solid #333"></div><div class="b" style="left:1368px;top:131px;width:45px;height:18px;background:linear-gradient(#eaa898 0%,#d86a50 45%,#c02a10 55%,#d85a3a 100%);border:1px solid #4a2020;border-radius:0 0 4px 0"></div><div class="t" style="left:1368px;top:132px;width:45px;text-align:center;font-size:15px;font-weight:bold;color:#fff;text-shadow:0 0 1px #222,0 0 1px #222">x</div><div class="b" style="left:869px;top:161px;width:543px;height:20px;background:#444444"></div><div class="t" style="left:877px;top:164px;font-size:11px;color:#cfcfcf;">File</div><div class="t" style="left:907px;top:164px;font-size:11px;color:#cfcfcf;">View</div><div class="t" style="left:944px;top:164px;font-size:11px;color:#cfcfcf;">Render</div><div class="t" style="left:994px;top:164px;font-size:11px;color:#cfcfcf;">IPR</div><div class="t" style="left:1026px;top:164px;font-size:11px;color:#cfcfcf;">Options</div><div class="t" style="left:1077px;top:164px;font-size:11px;color:#cfcfcf;">Display</div><div class="t" style="left:1127px;top:164px;font-size:11px;color:#cfcfcf;">Help</div><div class="b" style="left:869px;top:181px;width:543px;height:28px;background:#444444"></div><div class="b" style="left:952px;top:184px;width:1px;height:22px;background:#777"></div><div class="b" style="left:1011px;top:184px;width:1px;height:22px;background:#777"></div><div class="b" style="left:1041px;top:184px;width:1px;height:22px;background:#777"></div><div class="b" style="left:1126px;top:184px;width:1px;height:22px;background:#777"></div><div class="b" style="left:1184px;top:184px;width:1px;height:22px;background:#777"></div><div class="b" style="left:1213px;top:184px;width:1px;height:22px;background:#777"></div><svg class="b" style="left:874px;top:184px" width="20" height="22" viewBox="0 0 20 22"><g transform="translate(1 2)"><path d="M2 8L16 6L17 16L3 18Z" fill="url(#gclap)" stroke="#222" stroke-width="0.6"/><path d="M1 6L15 1L16 4L2 9Z" fill="#222" stroke="#ddd" stroke-width="0.5"/><path d="M4 5L6 8M8 3.5L10 6.5M12 2L14 5" stroke="#eee" stroke-width="1.6"/></g></svg><div class="b" style="left:900px;top:185px;width:20px;height:19px;border:1.5px solid #c82020"></div><svg class="b" style="left:901px;top:185px" width="18" height="19" viewBox="0 0 18 19"><g transform="translate(1 2)"><path d="M2 8L16 6L17 16L3 18Z" fill="url(#gclap)" stroke="#222" stroke-width="0.6"/><path d="M1 6L15 1L16 4L2 9Z" fill="#222" stroke="#ddd" stroke-width="0.5"/><path d="M4 5L6 8M8 3.5L10 6.5M12 2L14 5" stroke="#eee" stroke-width="1.6"/></g></svg><svg class="b" style="left:927px;top:184px" width="21" height="22" viewBox="0 0 21 22"><rect x="1" y="6" width="19" height="13" rx="1.5" fill="url(#ggrey)" stroke="#333" stroke-width="0.6"/><rect x="5" y="4" width="6" height="3" fill="#ccc" stroke="#333" stroke-width="0.5"/><circle cx="10.5" cy="12.5" r="4.5" fill="#222" stroke="#eee" stroke-width="1"/><circle cx="10.5" cy="12.5" r="2" fill="#777"/><circle cx="4" cy="9" r="1" fill="#30c030"/></svg><div class="b" style="left:952px;top:185px;width:1px;height:22px;background:#8a8a8a"></div><svg class="b" style="left:959px;top:184px" width="18" height="22" viewBox="0 0 18 22"><g transform="translate(0 2)"><path d="M2 8L16 6L17 16L3 18Z" fill="#f0f0f0" stroke="#222" stroke-width="0.6"/><path d="M1 6L15 1L16 4L2 9Z" fill="#222" stroke="#ddd" stroke-width="0.5"/><path d="M4 5L6 8M8 3.5L10 6.5M12 2L14 5" stroke="#eee" stroke-width="1.6"/></g><text x="3" y="19" font-size="6.5" font-weight="bold" fill="#111" font-family="Liberation Sans">IPR</text></svg><svg class="b" style="left:984px;top:184px" width="22" height="22" viewBox="0 0 22 22"><path d="M4 9A7.5 7.5 0 0 1 17 6" fill="none" stroke="#8a8a8a" stroke-width="3"/><path d="M19 1L19 9L12 8Z" fill="#8a8a8a"/><path d="M18 13A7.5 7.5 0 0 1 5 16" fill="none" stroke="#8a8a8a" stroke-width="3"/><path d="M3 21L3 13L10 14Z" fill="#8a8a8a"/></svg><div class="b" style="left:1010px;top:185px;width:1px;height:22px;background:#8a8a8a"></div><svg class="b" style="left:1015px;top:184px" width="22" height="22" viewBox="0 0 22 22"><circle cx="4" cy="7" r="2.5" fill="none" stroke="#ddd" stroke-width="1.2"/><circle cx="4" cy="16" r="2.5" fill="none" stroke="#ddd" stroke-width="1.2"/><g transform="translate(4 2)"><path d="M2 8L16 6L17 16L3 18Z" fill="url(#gclap)" stroke="#222" stroke-width="0.6"/><path d="M1 6L15 1L16 4L2 9Z" fill="#222" stroke="#ddd" stroke-width="0.5"/><path d="M4 5L6 8M8 3.5L10 6.5M12 2L14 5" stroke="#eee" stroke-width="1.6"/></g></svg><div class="b" style="left:1041px;top:185px;width:1px;height:22px;background:#8a8a8a"></div><svg class="b" style="left:1046px;top:184px" width="22" height="22" viewBox="0 0 22 22"><defs><radialGradient id="rr" cx="0.3" cy="0.5"><stop offset="0" stop-color="#ff4040"/><stop offset="1" stop-color="#800000"/></radialGradient><radialGradient id="rg" cx="0.5" cy="0.5"><stop offset="0" stop-color="#40ff40"/><stop offset="1" stop-color="#006000"/></radialGradient><radialGradient id="rb" cx="0.7" cy="0.5"><stop offset="0" stop-color="#6080ff"/><stop offset="1" stop-color="#001080"/></radialGradient></defs><rect x="0" y="0.5" width="22" height="21" fill="#111"/><ellipse cx="11" cy="11" rx="9.5" ry="10" fill="url(#rg)"/><path d="M11 1A9.5 10 0 0 0 11 21Q6 11 11 1Z" fill="url(#rr)"/><path d="M11 1A9.5 10 0 0 1 11 21Q16 11 11 1Z" fill="url(#rb)"/></svg><svg class="b" style="left:1073px;top:184px" width="22" height="22" viewBox="0 0 22 22"><circle cx="11" cy="11" r="9.5" fill="#777"/><path d="M11 1.5V20.5M1.5 11H20.5" stroke="#5a5a5a" stroke-width="1"/><path d="M11 1.5A9.5 9.5 0 0 1 20.5 11H11Z" fill="#8a8a8a"/><path d="M11 20.5A9.5 9.5 0 0 1 1.5 11H11Z" fill="#8a8a8a"/></svg><div class="t" style="left:1101px;top:187px;font-size:15px;color:#e4e4e4;font-weight:bold">1:1</div><div class="b" style="left:1126px;top:185px;width:1px;height:22px;background:#8a8a8a"></div><svg class="b" style="left:1131px;top:184px" width="22" height="22" viewBox="0 0 22 22"><rect x="1.5" y="1.5" width="19" height="19" fill="#1a1a1a" stroke="#30b030" stroke-width="1.5"/><rect x="5" y="5" width="12" height="12" fill="#3a80c0" stroke="#ddd" stroke-width="0.8"/><path d="M6 16L16 6" stroke="#e0e040" stroke-width="1.6"/><path d="M5 17L10 12L5 12Z" fill="#40a040"/></svg><svg class="b" style="left:1157px;top:184px" width="24" height="22" viewBox="0 0 24 22"><rect x="1" y="1" width="14" height="13" fill="#3a80c0" stroke="#ddd" stroke-width="1"/><path d="M3 12L13 3" stroke="#e0e040" stroke-width="1.5"/><path d="M3 13L8 8V13Z" fill="#40a040"/><path d="M11 10H22L21 22H12Z" fill="url(#gtrash)" stroke="#222" stroke-width="0.6"/><rect x="10" y="8.5" width="13" height="2.5" rx="1" fill="#aaa" stroke="#222" stroke-width="0.5"/></svg><div class="b" style="left:1184px;top:185px;width:1px;height:22px;background:#8a8a8a"></div><svg class="b" style="left:1189px;top:184px" width="22" height="22" viewBox="0 0 22 22"><rect x="1" y="2" width="13" height="10" fill="#333" stroke="#ddd" stroke-width="0.9"/><path d="M3 5L6 8L9 5" stroke="#ddd" stroke-width="0.7" fill="none"/><g transform="translate(5 6)"><path d="M2 8L16 6L17 16L3 18Z" fill="url(#gclap)" stroke="#222" stroke-width="0.6"/><path d="M1 6L15 1L16 4L2 9Z" fill="#222" stroke="#ddd" stroke-width="0.5"/><path d="M4 5L6 8M8 3.5L10 6.5M12 2L14 5" stroke="#eee" stroke-width="1.6"/></g></svg><div class="b" style="left:1214px;top:185px;width:1px;height:22px;background:#8a8a8a"></div><div class="b" style="left:1218px;top:183px;width:95px;height:24px;background:#5a5a5a;border:1px solid #2e2e2e;border-radius:3px"></div><div class="b" style="left:1306px;top:184px;width:1px;height:22px;background:#3a3a3a"></div><div class="t" style="left:1222px;top:189px;font-size:11px;color:#dcdcdc;">Maya Software</div><div class="b" style="left:1320px;top:188px;width:4px;height:13px;background:#c4c4c4"></div><div class="b" style="left:1327px;top:188px;width:4px;height:13px;background:#c4c4c4"></div><div class="t" style="left:1339px;top:189px;font-size:11px;color:#dcdcdc;">IPR: 0MB</div><svg class="b" style="left:1390px;top:186px" width="16" height="16" viewBox="0 0 16 16"><path d="M5 1H11L15 5V11L11 15H5L1 11V5Z" fill="#8a8a8a"/></svg><svg class="b" style="left:0;top:0" width="1439" height="808"><rect x="876" y="254" width="529" height="398" fill="#000"/><clipPath id="rv"><rect x="876" y="254" width="529" height="398"/></clipPath><g clip-path="url(#rv)"><g transform="translate(848.6 207.7) scale(0.558)"><defs><linearGradient id="rsh" gradientUnits="userSpaceOnUse" x1="560" y1="300" x2="590" y2="460"><stop offset="0" stop-color="#3e3d3b"/><stop offset="0.5" stop-color="#383735"/><stop offset="1" stop-color="#2f2e2c"/></linearGradient><linearGradient id="rla" gradientUnits="userSpaceOnUse" x1="515" y1="355" x2="495" y2="425"><stop offset="0" stop-color="#35241c"/><stop offset="0.6" stop-color="#573d30"/><stop offset="1" stop-color="#826354"/></linearGradient><linearGradient id="rra" gradientUnits="userSpaceOnUse" x1="610" y1="370" x2="640" y2="500"><stop offset="0" stop-color="#634332"/><stop offset="0.45" stop-color="#8a5f4a"/><stop offset="1" stop-color="#6e5045"/></linearGradient><linearGradient id="rfa" gradientUnits="userSpaceOnUse" x1="545" y1="260" x2="590" y2="330"><stop offset="0" stop-color="#917361"/><stop offset="0.45" stop-color="#7e5c4a"/><stop offset="1" stop-color="#402c22"/></linearGradient><linearGradient id="rne" gradientUnits="userSpaceOnUse" x1="560" y1="310" x2="595" y2="340"><stop offset="0" stop-color="#402c22"/><stop offset="1" stop-color="#846350"/></linearGradient><linearGradient id="rpa" gradientUnits="userSpaceOnUse" x1="515" y1="450" x2="610" y2="600"><stop offset="0" stop-color="#0e0f13"/><stop offset="1" stop-color="#14171c"/></linearGradient></defs><path d="M514.7 340.0C515.7 342.1 519.2 358.8 520.9 364.8C522.5 370.8 525.2 372.6 524.6 375.9C524.0 379.2 519.9 381.3 517.2 384.6C514.5 387.9 510.3 391.6 508.5 395.7C506.7 399.8 507.0 404.4 506.6 409.3C506.2 414.2 507.1 422.1 506.0 425.4C504.9 428.7 501.4 428.8 499.8 429.2C498.2 429.6 497.7 429.5 496.1 427.9C494.6 426.2 491.1 423.0 490.5 419.3C489.9 415.6 491.5 409.5 492.4 405.6C493.3 401.7 494.9 399.0 496.1 395.7C497.3 392.4 498.2 390.1 499.8 385.8C501.4 381.5 503.5 375.3 506.0 369.7C508.5 364.1 513.2 357.3 514.7 352.4C516.2 347.4 513.7 337.9 514.7 340.0Z" fill="url(#rla)"/><path d="M606.8 366.0C611.2 361.5 630.0 357.9 635.3 365.0C640.6 372.1 637.5 395.6 638.4 408.9C639.3 422.2 639.8 434.2 640.5 444.7C641.2 455.2 641.0 464.7 642.6 472.1C644.2 479.5 648.9 484.8 650.0 489.0C651.1 493.2 650.2 495.3 649.0 497.4C647.8 499.5 645.4 499.2 642.6 501.6C639.8 504.1 634.4 510.7 632.1 512.1C629.8 513.5 629.6 512.5 628.9 510.0C628.2 507.6 630.2 499.5 627.9 497.4C625.6 495.3 618.6 497.4 615.3 497.4C612.0 497.4 608.6 498.5 607.9 497.4C607.2 496.3 608.4 493.8 611.0 491.0C613.6 488.2 621.4 486.4 623.7 480.5C626.0 474.6 625.8 467.2 624.7 455.3C623.7 443.4 620.0 419.4 617.4 408.9C614.8 398.4 610.8 399.2 609.0 392.1C607.2 385.0 602.4 370.5 606.8 366.0Z" fill="url(#rra)"/><path d="M527.0 436.0C528.7 432.2 528.2 441.4 531.3 444.2C534.4 447.0 538.9 450.4 545.5 452.8C552.1 455.2 562.7 458.0 571.2 458.5C579.8 459.0 590.2 457.9 596.8 455.6C603.4 453.4 608.4 444.5 611.0 445.0C613.6 445.5 612.9 451.5 612.4 458.5C611.9 465.5 609.4 477.4 608.2 486.9C607.0 496.4 606.0 505.9 605.3 515.4C604.6 524.9 604.6 534.4 603.9 543.9C603.2 553.4 602.8 561.9 601.1 572.3C599.4 582.7 595.6 598.9 593.9 606.5C592.2 614.1 596.1 615.5 591.1 617.9C586.1 620.3 568.3 621.2 564.0 620.7C559.7 620.2 565.0 618.3 565.5 615.0C566.0 611.7 566.7 610.3 566.9 600.8C567.1 591.3 567.1 567.1 566.9 558.1C566.7 549.1 568.4 549.1 565.5 546.7C562.6 544.3 553.1 545.8 549.8 543.9C546.5 542.0 548.6 538.6 545.5 535.3C542.4 532.0 536.0 527.7 531.3 523.9C526.6 520.1 520.4 516.9 517.1 512.6C513.8 508.3 511.6 503.1 511.4 498.3C511.2 493.6 514.1 489.3 515.7 484.1C517.4 478.9 519.4 475.0 521.3 467.0C523.2 459.0 525.3 439.8 527.0 436.0Z" fill="url(#rpa)"/><path d="M566.9 596.0C572.0 592.8 592.0 592.4 596.0 596.0C600.0 599.6 596.4 613.8 591.1 617.9C585.8 622.0 568.3 621.2 564.0 620.7C559.7 620.2 565.0 619.1 565.5 615.0C566.0 610.9 561.8 599.2 566.9 596.0Z" fill="#16191e"/><path d="M545.0 540.0C549.3 539.5 562.1 544.2 565.5 546.7C568.9 549.2 567.9 552.8 565.5 555.3C563.1 557.8 556.2 561.5 551.0 562.0C545.8 562.5 536.1 560.2 534.2 558.1C532.4 556.0 538.1 552.6 539.9 549.6C541.7 546.6 540.7 540.5 545.0 540.0Z" fill="#121214"/><path d="M564.0 614.0C569.1 610.8 587.2 610.3 591.5 613.0C595.8 615.7 595.1 626.8 590.0 630.0C584.9 633.2 565.3 634.7 561.0 632.0C556.7 629.3 558.9 617.2 564.0 614.0Z" fill="#121214"/><path d="M534.2 557.1C537.7 557.1 545.8 561.5 551.0 561.0C556.2 560.5 563.6 553.8 565.5 554.3C567.4 554.8 565.0 560.5 562.6 563.8C560.2 567.0 555.0 571.7 551.2 573.8C547.4 575.9 543.5 577.3 539.9 576.6C536.3 575.9 531.6 572.1 529.9 569.5C528.2 566.9 529.2 563.0 529.9 560.9C530.6 558.8 530.7 557.1 534.2 557.1Z" fill="#a5a5a5"/><path d="M561.0 628.0C563.5 627.6 570.1 630.3 575.0 630.0C579.9 629.7 587.8 626.1 590.2 626.0C592.7 625.9 590.7 625.9 589.7 629.3C588.7 632.7 587.1 642.5 584.0 646.3C580.9 650.1 575.0 652.0 571.2 652.0C567.4 652.0 563.1 649.6 561.2 646.3C559.3 643.0 559.8 635.1 559.8 632.1C559.8 629.1 558.5 628.4 561.0 628.0Z" fill="#a9a9a9"/><path d="M531.2 299.8C536.4 297.4 540.2 296.2 543.0 299.8C545.8 303.4 547.2 317.0 548.0 321.5C548.8 326.0 544.5 323.2 548.0 326.7C551.5 330.2 562.6 340.6 569.3 342.3C576.0 344.0 583.2 341.3 588.4 337.0C593.6 332.7 595.0 318.0 600.5 316.3C606.0 314.6 615.5 322.9 621.3 326.7C627.1 330.4 632.3 334.8 635.2 338.8C638.1 342.9 638.4 347.2 638.7 351.0C639.0 354.8 637.5 358.8 636.9 361.3C636.3 363.8 637.9 364.9 635.3 365.8C632.7 366.7 626.0 366.1 621.3 366.5C616.5 366.9 609.6 363.6 606.8 367.9C604.0 372.2 605.1 383.5 604.7 392.1C604.4 400.7 603.7 412.5 604.7 419.5C605.8 426.5 610.0 429.6 611.0 434.2C612.0 438.8 613.4 443.5 611.0 447.1C608.6 450.7 603.4 453.7 596.8 455.6C590.2 457.5 579.8 459.0 571.2 458.5C562.7 458.0 552.1 455.2 545.5 452.8C538.9 450.4 534.1 448.0 531.3 444.2C528.5 440.4 528.8 437.1 528.5 430.0C528.2 422.9 529.5 410.1 529.5 401.9C529.5 393.7 529.7 386.7 528.3 380.9C526.9 375.1 522.9 372.8 520.9 367.2C518.9 361.6 517.7 352.5 516.5 347.5C515.3 342.5 514.9 341.1 513.9 337.0C512.9 332.9 510.7 326.9 510.4 323.2C510.1 319.4 508.6 318.4 512.1 314.5C515.6 310.6 526.1 302.2 531.2 299.8Z" fill="url(#rsh)" stroke="#211f1e" stroke-width="0.8"/><path d="M546.0 312.0C548.3 310.6 555.2 318.0 560.0 318.0C564.8 318.0 570.0 315.3 574.5 312.0C579.0 308.7 583.8 300.6 586.7 298.0C589.6 295.4 590.3 293.9 592.0 296.7C593.7 299.4 595.6 310.4 597.0 314.5C598.4 318.6 601.9 317.8 600.5 321.5C599.1 325.2 593.6 333.5 588.4 337.0C583.2 340.5 576.4 344.0 569.3 342.3C562.2 340.6 549.9 331.8 546.0 326.7C542.1 321.6 543.7 313.4 546.0 312.0Z" fill="url(#rne)"/><path d="M567.6 247.8C573.4 246.1 577.8 248.8 581.5 250.4C585.2 252.0 588.2 253.8 590.1 257.3C592.0 260.8 592.1 266.9 592.7 271.2C593.3 275.5 593.0 281.1 593.6 283.3C594.2 285.5 596.1 283.4 596.5 284.5C596.9 285.6 597.0 287.3 596.2 290.0C595.5 292.7 593.6 298.1 592.0 300.7C590.4 303.3 589.6 303.0 586.7 305.9C583.8 308.8 579.4 313.7 574.5 318.0C569.6 322.3 561.2 329.9 557.2 331.9C553.2 333.9 552.2 331.8 550.3 330.1C548.4 328.4 546.6 325.0 545.9 321.5C545.2 318.0 546.9 313.4 545.9 309.3C544.9 305.2 540.8 300.7 539.9 297.2C539.0 293.7 540.3 292.8 540.7 288.5C541.1 284.2 541.5 275.8 542.5 271.2C543.5 266.6 542.6 264.7 546.8 260.8C551.0 256.9 561.8 249.5 567.6 247.8Z" fill="url(#rfa)"/><path d="M567.6 246.8C573.4 245.1 577.8 247.8 581.5 249.4C585.2 251.0 588.1 252.7 590.1 256.3C592.1 259.9 592.6 266.8 593.2 271.2C593.9 275.6 594.5 279.9 594.0 283.0C593.5 286.1 591.3 290.2 590.0 290.0C588.7 289.8 588.0 285.0 586.0 282.0C584.0 279.0 581.3 274.7 578.0 272.0C574.7 269.3 570.2 267.2 566.0 266.0C561.8 264.8 556.8 264.6 553.0 265.0C549.2 265.4 544.3 269.6 543.3 268.7C542.3 267.8 542.8 263.4 546.8 259.8C550.8 256.2 561.8 248.5 567.6 246.8Z" fill="#3d2e21"/><path d="M541.0 295.0C541.5 293.8 547.2 293.5 549.0 294.0C550.8 294.5 552.5 296.8 552.0 298.0C551.5 299.2 547.8 301.5 546.0 301.0C544.2 300.5 540.5 296.2 541.0 295.0Z" fill="#352925"/><path d="M557.0 300.0C557.7 299.0 563.7 298.7 566.0 299.0C568.3 299.3 571.7 301.0 571.0 302.0C570.3 303.0 564.3 305.3 562.0 305.0C559.7 304.7 556.3 301.0 557.0 300.0Z" fill="#352925"/><path d="M547 304Q551 310 551 316L547 317Z" fill="#9b7e6d" opacity="0.6"/><path d="M546 321Q551 323 556 321" stroke="#4c2922" stroke-width="1.2" fill="none"/><path d="M531 446Q560 462 606 452" stroke="#070708" stroke-width="2.5" fill="none"/></g></g></svg><div class="t" style="left:1013px;top:664px;font-size:11px;color:#dcdcdc;font-weight:bold">size: 640 x 480 zoom: 0.828</div><div class="t" style="left:1181px;top:664px;font-size:11px;color:#dcdcdc;font-weight:bold">(Maya Software)</div><div class="t" style="left:989px;top:680px;font-size:11px;color:#dcdcdc;font-weight:bold">Frame: 16</div><div class="t" style="left:1066px;top:680px;font-size:11px;color:#dcdcdc;font-weight:bold">Render Time: 0:04</div><div class="t" style="left:1188px;top:680px;font-size:11px;color:#dcdcdc;font-weight:bold">Camera: persp</div><div class="b" style="left:1421px;top:124px;width:18px;height:586px;background:linear-gradient(90deg,#303030,#3a3a3a)"></div><div class="b" style="left:1421px;top:142px;width:1px;height:568px;background:#262626"></div><div class="b" style="left:1422px;top:586px;width:13px;height:96px;background:#333;border:1px solid #242424;border-radius:3px"></div><div class="b" style="left:1422px;top:684px;width:13px;height:24px;background:#3e3e3e;border:1px solid #262626;border-radius:3px"></div><div class="b" style="left:1437px;top:124px;width:2px;height:586px;background:#5a5a5a"></div><div class="b" style="left:1421px;top:128px;width:16px;height:14px;background:#2e2e2e;border:1px solid #5a5a5a;border-radius:2px"></div><svg class="b" style="left:1421px;top:128px" width="16" height="14" viewBox="0 0 16 14"><path d="M4 3L12 11M12 3L4 11" stroke="#0a0a0a" stroke-width="2"/></svg><div class="b" style="left:1416px;top:158px;width:5px;height:548px;background:linear-gradient(#c8d0d8,#b8c2cc 23%,#485868 25%,#3e4e5e 100%)"></div><div class="b" style="left:1415px;top:157px;width:1px;height:545px;background:#dde6ee"></div><div class="b" style="left:0px;top:710px;width:1439px;height:5px;background:#3a3a3a"></div><div class="b" style="left:0px;top:715px;width:1439px;height:33px;background:#444444"></div><div class="b" style="left:8px;top:718px;width:2px;height:2px;background:#5e5e5e"></div><div class="b" style="left:12px;top:720px;width:2px;height:2px;background:#5e5e5e"></div><div class="b" style="left:8px;top:723px;width:2px;height:2px;background:#5e5e5e"></div><div class="b" style="left:12px;top:725px;width:2px;height:2px;background:#5e5e5e"></div><div class="b" style="left:8px;top:728px;width:2px;height:2px;background:#5e5e5e"></div><div class="b" style="left:12px;top:730px;width:2px;height:2px;background:#5e5e5e"></div><div class="b" style="left:8px;top:733px;width:2px;height:2px;background:#5e5e5e"></div><div class="b" style="left:12px;top:735px;width:2px;height:2px;background:#5e5e5e"></div><div class="b" style="left:8px;top:738px;width:2px;height:2px;background:#5e5e5e"></div><div class="b" style="left:12px;top:740px;width:2px;height:2px;background:#5e5e5e"></div><div class="b" style="left:15px;top:715px;width:1120px;height:30px;background:linear-gradient(#8e8e8e,#858585)"></div><div class="b" style="left:715px;top:715px;width:46px;height:30px;background:#6e6e6e"></div><div class="b" style="left:21px;top:729px;width:2px;height:15px;background:#111"></div><div class="t" style="left:31px;top:716px;font-size:10px;color:#111;">1</div><div class="b" style="left:67px;top:729px;width:2px;height:15px;background:#111"></div><div class="t" style="left:77px;top:716px;font-size:10px;color:#111;">2</div><div class="b" style="left:113px;top:729px;width:2px;height:15px;background:#111"></div><div class="t" style="left:123px;top:716px;font-size:10px;color:#111;">3</div><div class="b" style="left:160px;top:729px;width:2px;height:15px;background:#111"></div><div class="t" style="left:170px;top:716px;font-size:10px;color:#111;">4</div><div class="b" style="left:206px;top:729px;width:2px;height:15px;background:#111"></div><div class="t" style="left:216px;top:716px;font-size:10px;color:#111;">5</div><div class="b" style="left:252px;top:729px;width:2px;height:15px;background:#111"></div><div class="t" style="left:262px;top:716px;font-size:10px;color:#111;">6</div><div class="b" style="left:298px;top:729px;width:2px;height:15px;background:#111"></div><div class="t" style="left:308px;top:716px;font-size:10px;color:#111;">7</div><div class="b" style="left:344px;top:729px;width:2px;height:15px;background:#111"></div><div class="t" style="left:354px;top:716px;font-size:10px;color:#111;">8</div><div class="b" style="left:391px;top:729px;width:2px;height:15px;background:#111"></div><div class="t" style="left:401px;top:716px;font-size:10px;color:#111;">9</div><div class="b" style="left:437px;top:729px;width:2px;height:15px;background:#111"></div><div class="t" style="left:447px;top:716px;font-size:10px;color:#111;">10</div><div class="b" style="left:483px;top:729px;width:2px;height:15px;background:#111"></div><div class="t" style="left:493px;top:716px;font-size:10px;color:#111;">11</div><div class="b" style="left:529px;top:729px;width:2px;height:15px;background:#111"></div><div class="t" style="left:539px;top:716px;font-size:10px;color:#111;">12</div><div class="b" style="left:575px;top:729px;width:2px;height:15px;background:#111"></div><div class="t" style="left:585px;top:716px;font-size:10px;color:#111;">13</div><div class="b" style="left:622px;top:729px;width:2px;height:15px;background:#111"></div><div class="t" style="left:632px;top:716px;font-size:10px;color:#111;">14</div><div class="b" style="left:668px;top:729px;width:2px;height:15px;background:#111"></div><div class="t" style="left:678px;top:716px;font-size:10px;color:#111;">15</div><div class="b" style="left:714px;top:729px;width:2px;height:15px;background:#111"></div><div class="t" style="left:724px;top:716px;font-size:10px;color:#111;">16</div><div class="b" style="left:760px;top:729px;width:2px;height:15px;background:#111"></div><div class="t" style="left:770px;top:716px;font-size:10px;color:#111;">17</div><div class="b" style="left:806px;top:729px;width:2px;height:15px;background:#111"></div><div class="t" style="left:816px;top:716px;font-size:10px;color:#111;">18</div><div class="b" style="left:853px;top:729px;width:2px;height:15px;background:#111"></div><div class="t" style="left:863px;top:716px;font-size:10px;color:#111;">19</div><div class="b" style="left:899px;top:729px;width:2px;height:15px;background:#111"></div><div class="t" style="left:909px;top:716px;font-size:10px;color:#111;">20</div><div class="b" style="left:945px;top:729px;width:2px;height:15px;background:#111"></div><div class="t" style="left:955px;top:716px;font-size:10px;color:#111;">21</div><div class="b" style="left:991px;top:729px;width:2px;height:15px;background:#111"></div><div class="t" style="left:1001px;top:716px;font-size:10px;color:#111;">22</div><div class="b" style="left:1037px;top:729px;width:2px;height:15px;background:#111"></div><div class="t" style="left:1047px;top:716px;font-size:10px;color:#111;">23</div><div class="b" style="left:1084px;top:729px;width:2px;height:15px;background:#111"></div><div class="t" style="left:1094px;top:716px;font-size:10px;color:#111;">24</div><div class="t" style="left:724px;top:730px;font-size:10px;color:#f4f4f4;">16</div><div class="b" style="left:1138px;top:719px;width:68px;height:22px;background:#2b2b2b;border:1px solid #3a3a3a;border-radius:2px"></div><div class="t" style="left:1143px;top:724px;font-size:11px;color:#d6d6d6;">16.00</div><svg class="b" style="left:1215px;top:724px" width="20" height="16" viewBox="0 0 20 16"><rect x="1" y="1" width="3.5" height="13" fill="#c8c8c8" stroke="#2a2a2a" stroke-width="0.8"/><path d="M11 1.5L5 7.5L11 13.5ZM18 1.5L12 7.5L18 13.5Z" fill="#c8c8c8" stroke="#2a2a2a" stroke-width="0.8"/></svg><svg class="b" style="left:1243px;top:724px" width="20" height="16" viewBox="0 0 20 16"><rect x="2" y="1" width="3.5" height="13" fill="#c8c8c8" stroke="#2a2a2a" stroke-width="0.8"/><path d="M16 1L7 7.5L16 14Z" fill="#c8c8c8" stroke="#2a2a2a" stroke-width="0.8"/></svg><svg class="b" style="left:1271px;top:724px" width="20" height="16" viewBox="0 0 20 16"><rect x="2" y="1" width="3.5" height="13" fill="#c8c8c8" stroke="#2a2a2a" stroke-width="0.8"/><path d="M3.7 -1V16" stroke="#d02020" stroke-width="0.9"/><path d="M16 1L7 7.5L16 14Z" fill="#c8c8c8" stroke="#2a2a2a" stroke-width="0.8"/></svg><svg class="b" style="left:1299px;top:724px" width="20" height="16" viewBox="0 0 20 16"><path d="M15 1L6 7.5L15 14Z" fill="#c8c8c8" stroke="#2a2a2a" stroke-width="0.8"/></svg><svg class="b" style="left:1326px;top:724px" width="20" height="16" viewBox="0 0 20 16"><path d="M5 1L14 7.5L5 14Z" fill="#c8c8c8" stroke="#2a2a2a" stroke-width="0.8"/></svg><svg class="b" style="left:1354px;top:724px" width="20" height="16" viewBox="0 0 20 16"><path d="M3 1L12 7.5L3 14Z" fill="#c8c8c8" stroke="#2a2a2a" stroke-width="0.8"/><rect x="13" y="1" width="3.5" height="13" fill="#c8c8c8" stroke="#2a2a2a" stroke-width="0.8"/><path d="M14.8 -1V16" stroke="#d02020" stroke-width="0.9"/></svg><svg class="b" style="left:1382px;top:724px" width="20" height="16" viewBox="0 0 20 16"><path d="M3 1L12 7.5L3 14Z" fill="#c8c8c8" stroke="#2a2a2a" stroke-width="0.8"/><rect x="13.5" y="1" width="3.5" height="13" fill="#c8c8c8" stroke="#2a2a2a" stroke-width="0.8"/></svg><svg class="b" style="left:1409px;top:724px" width="20" height="16" viewBox="0 0 20 16"><path d="M2 1.5L8 7.5L2 13.5ZM9 1.5L15 7.5L9 13.5Z" fill="#c8c8c8" stroke="#2a2a2a" stroke-width="0.8"/><rect x="15.5" y="1" width="3.5" height="13" fill="#c8c8c8" stroke="#2a2a2a" stroke-width="0.8"/></svg><div class="b" style="left:0px;top:746px;width:1439px;height:2px;background:#353535"></div><div class="b" style="left:0px;top:748px;width:1439px;height:30px;background:#444444"></div><div class="b" style="left:8px;top:752px;width:2px;height:2px;background:#5e5e5e"></div><div class="b" style="left:12px;top:754px;width:2px;height:2px;background:#5e5e5e"></div><div class="b" style="left:8px;top:757px;width:2px;height:2px;background:#5e5e5e"></div><div class="b" style="left:12px;top:759px;width:2px;height:2px;background:#5e5e5e"></div><div class="b" style="left:8px;top:762px;width:2px;height:2px;background:#5e5e5e"></div><div class="b" style="left:12px;top:764px;width:2px;height:2px;background:#5e5e5e"></div><div class="b" style="left:8px;top:767px;width:2px;height:2px;background:#5e5e5e"></div><div class="b" style="left:12px;top:769px;width:2px;height:2px;background:#5e5e5e"></div><div class="b" style="left:15px;top:754px;width:68px;height:18px;background:#2b2b2b;border:1px solid #3a3a3a;border-radius:2px"></div><div class="t" style="left:19px;top:757px;font-size:11px;color:#d6d6d6;">1.00</div><div class="b" style="left:87px;top:754px;width:68px;height:18px;background:#2b2b2b;border:1px solid #3a3a3a;border-radius:2px"></div><div class="t" style="left:91px;top:757px;font-size:11px;color:#d6d6d6;">1.00</div><div class="b" style="left:158px;top:754px;width:842px;height:21px;background:#2b2b2b"></div><div class="b" style="left:164px;top:756px;width:420px;height:18px;background:linear-gradient(#8a8a8a,#727272);border-top:1px solid #9a9a9a"></div><div class="b" style="left:169px;top:758px;width:9px;height:11px;border-right:1px solid #222;border-bottom:1px solid #222"></div><div class="t" style="left:183px;top:758px;font-size:11px;color:#eaeaea;">1</div><div class="t" style="left:553px;top:758px;font-size:11px;color:#eaeaea;">24</div><div class="b" style="left:570px;top:758px;width:9px;height:11px;border-left:1px solid #222;border-bottom:1px solid #222"></div><div class="b" style="left:1003px;top:754px;width:68px;height:18px;background:#2b2b2b;border:1px solid #3a3a3a;border-radius:2px"></div><div class="t" style="left:1007px;top:757px;font-size:11px;color:#d6d6d6;">24.00</div><div class="b" style="left:1075px;top:754px;width:68px;height:18px;background:#2b2b2b;border:1px solid #3a3a3a;border-radius:2px"></div><div class="t" style="left:1079px;top:757px;font-size:11px;color:#d6d6d6;">48.00</div><div class="b" style="left:1149px;top:760px;width:0;height:0;border-left:5px solid transparent;border-right:5px solid transparent;border-top:6px solid #909090"></div><div class="b" style="left:1165px;top:754px;width:100px;height:18px;background:#2b2b2b;border:1px solid #3a3a3a;border-radius:2px"></div><div class="t" style="left:1169px;top:757px;font-size:11px;color:#d6d6d6;">No Anim Layer</div><div class="b" style="left:1272px;top:760px;width:0;height:0;border-left:5px solid transparent;border-right:5px solid transparent;border-top:6px solid #909090"></div><div class="b" style="left:1288px;top:754px;width:100px;height:18px;background:#2b2b2b;border:1px solid #3a3a3a;border-radius:2px"></div><div class="t" style="left:1292px;top:757px;font-size:11px;color:#d6d6d6;">No Character Set</div><svg class="b" style="left:1394px;top:758px" width="18" height="10"><circle cx="4" cy="5" r="3" fill="none" stroke="#ccc" stroke-width="1.3"/><path d="M7 5H16M13 5V8M15 5V8" stroke="#ccc" stroke-width="1.3"/></svg><div class="b" style="left:1418px;top:755px;width:14px;height:15px;background:#eee;border:1px solid #888"></div><div class="b" style="left:1420px;top:758px;width:10px;height:1px;background:#d02020"></div><div class="b" style="left:1420px;top:762px;width:10px;height:1px;background:#d02020"></div><div class="b" style="left:0px;top:776px;width:1439px;height:2px;background:#353535"></div><div class="b" style="left:0px;top:778px;width:1439px;height:30px;background:#444444"></div><div class="b" style="left:8px;top:782px;width:2px;height:2px;background:#5e5e5e"></div><div class="b" style="left:12px;top:784px;width:2px;height:2px;background:#5e5e5e"></div><div class="b" style="left:8px;top:787px;width:2px;height:2px;background:#5e5e5e"></div><div class="b" style="left:12px;top:789px;width:2px;height:2px;background:#5e5e5e"></div><div class="b" style="left:8px;top:792px;width:2px;height:2px;background:#5e5e5e"></div><div class="b" style="left:12px;top:794px;width:2px;height:2px;background:#5e5e5e"></div><div class="b" style="left:8px;top:797px;width:2px;height:2px;background:#5e5e5e"></div><div class="b" style="left:12px;top:799px;width:2px;height:2px;background:#5e5e5e"></div><div class="t" style="left:25px;top:788px;font-size:11px;color:#d6d6d6;">MEL</div><div class="b" style="left:60px;top:781px;width:675px;height:24px;background:#2b2b2b;border:1px solid #3a3a3a;border-radius:3px"></div><div class="b" style="left:737px;top:781px;width:4px;height:24px;background:#3a3a3a"></div><div class="b" style="left:742px;top:781px;width:677px;height:25px;background:#000;border:1px solid #2a2a2a"></div><div class="b" style="left:1419px;top:786px;width:15px;height:15px;background:#ddd;border:1px solid #555"></div><div class="b" style="left:1421px;top:790px;width:11px;height:1px;background:#333"></div><div class="b" style="left:1421px;top:793px;width:11px;height:5px;background:#666"></div></body></html>
